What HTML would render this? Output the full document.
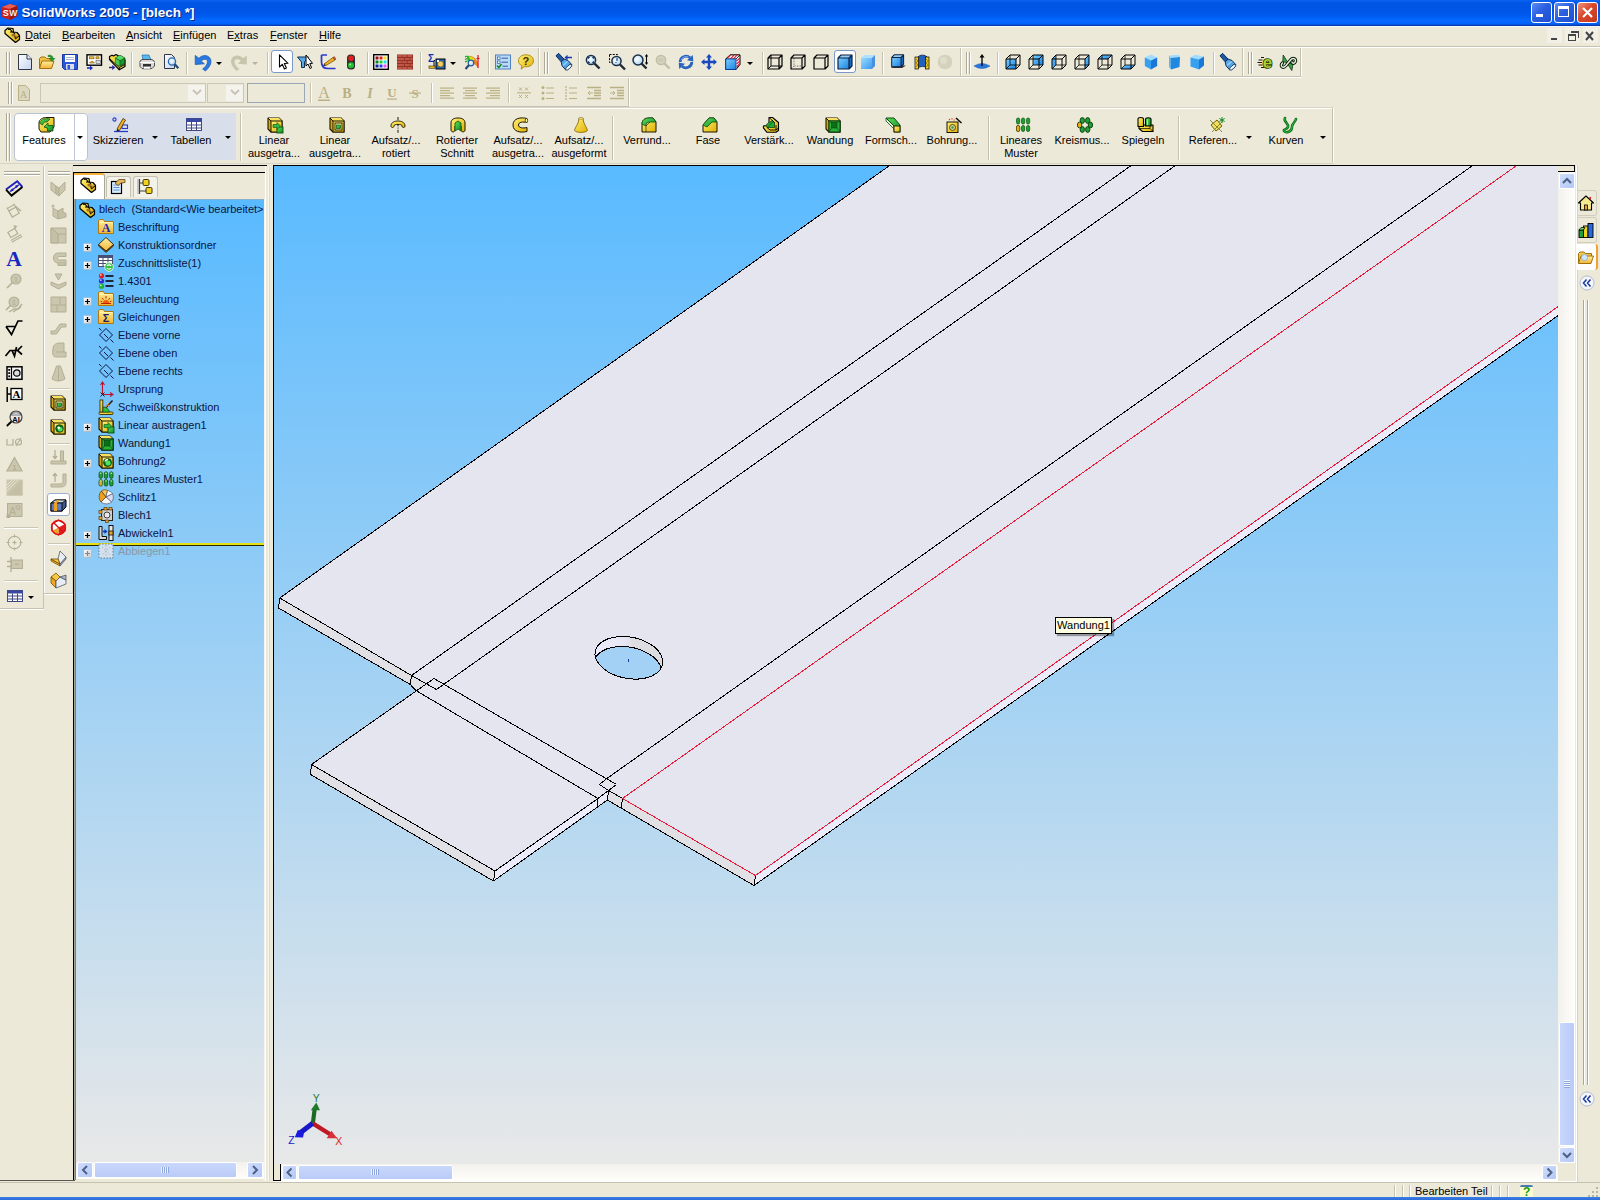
<!DOCTYPE html><html><head><meta charset="utf-8"><title>SolidWorks 2005 - [blech *]</title><style>
html,body{margin:0;padding:0;}
body{width:1600px;height:1200px;overflow:hidden;background:#ECE9D8;position:relative;font-family:"Liberation Sans",sans-serif;font-size:11px;color:#000;}
.a{position:absolute;}
.t{position:absolute;white-space:nowrap;line-height:13px;font-size:11px;}
.c{position:absolute;white-space:nowrap;line-height:13px;font-size:11px;text-align:center;width:80px;}
svg{position:absolute;overflow:visible;}
u{text-decoration:underline;}
.m::first-letter{text-decoration:underline;}
.sep{position:absolute;width:1px;background:#c5c2b2;border-right:1px solid #fff;}
.grip{position:absolute;width:1px;background:#aca899;border-right:1px solid #fff;}
</style></head><body>
<div class="a" style="left:0px;top:0px;width:1600px;height:26px;background:linear-gradient(#0c64f2 0%,#0459ea 8%,#0055e5 14%,#0055e6 42%,#0058ec 55%,#005ef4 65%,#0067fb 74%,#0a66ff 82%,#0062ff 90%,#0656e0 94%,#083cae 98%,#0838a0 100%);"></div>
<div class="a" style="left:0px;top:26px;width:1600px;height:1px;background:#f2f5fa;"></div>
<div class="t" style="left:21.5px;top:5px;font-size:13.5px;line-height:16px;font-weight:bold;color:#fff;text-shadow:1px 1px 0 #0a2a80;">SolidWorks 2005 - [blech *]</div>
<svg style="left:1px;top:3px;" width="17" height="18"><polygon points="1,4 9,1 16,3 16,13 9,17 1,14" fill="#c8201c"/><polygon points="1,4 9,1 16,3 9,6" fill="#e8605a"/><polygon points="9,6 16,3 16,13 9,17" fill="#a01410"/>
<text x="1.8" y="12.5" font-family="Liberation Sans,sans-serif" font-size="9" font-weight="bold" fill="#fff">S</text><text x="8.2" y="12.5" font-family="Liberation Sans,sans-serif" font-size="8.5" font-weight="bold" fill="#f4e8e8">W</text></svg>
<div class="a" style="left:1531px;top:2px;width:19px;height:19px;border:1px solid #fff;border-radius:3px;background:linear-gradient(135deg,#5c8cf5 0%,#2a5fe0 45%,#1f4fd0 100%);"></div>
<div class="a" style="left:1536px;top:14px;width:7px;height:3px;background:#fff;"></div>
<div class="a" style="left:1554px;top:2px;width:19px;height:19px;border:1px solid #fff;border-radius:3px;background:linear-gradient(135deg,#5c8cf5 0%,#2a5fe0 45%,#1f4fd0 100%);"></div>
<div class="a" style="left:1558px;top:6px;width:9px;height:7px;border:1px solid #fff;border-top:3px solid #fff;box-sizing:content-box;"></div>
<div class="a" style="left:1577px;top:2px;width:19px;height:19px;border:1px solid #fff;border-radius:3px;background:linear-gradient(135deg,#f0937a 0%,#d9472b 45%,#c23a1e 100%);"></div>
<svg style="left:1578px;top:3px;" width="19" height="19"><path d="M5 5 L14 14 M14 5 L5 14" stroke="#fff" stroke-width="2.2" fill="none"/></svg>
<div class="t m" style="left:25px;top:29px;">Datei</div>
<div class="t m" style="left:62px;top:29px;">Bearbeiten</div>
<div class="t m" style="left:126px;top:29px;">Ansicht</div>
<div class="t m" style="left:173px;top:29px;">Einfügen</div>
<div class="t" style="left:227px;top:29px;">Extras</div>
<div class="t m" style="left:270px;top:29px;">Fenster</div>
<div class="t m" style="left:319px;top:29px;">Hilfe</div>
<div class="a" style="left:234px;top:40px;width:6px;height:1px;background:#000;"></div>
<div class="a" style="left:1547px;top:28px;width:15px;height:15px;background:#f1efe6;"></div>
<div class="a" style="left:1565px;top:28px;width:15px;height:15px;background:#f1efe6;"></div>
<div class="a" style="left:1583px;top:28px;width:15px;height:15px;background:#f1efe6;"></div>
<svg style="left:1547px;top:28px;" width="52" height="16"><rect x="4" y="10" width="6" height="2" fill="#444"/>
<rect x="21.5" y="6.5" width="7" height="6" fill="none" stroke="#444"/><rect x="21" y="6" width="8" height="2" fill="#444"/><path d="M24 4.5 H31.5 V10" fill="none" stroke="#444"/><rect x="24" y="3" width="8" height="2" fill="#444"/>
<path d="M39 4 L46 12 M46 4 L39 12" stroke="#444" stroke-width="2" fill="none"/></svg>
<div class="a" style="left:0px;top:46px;width:1600px;height:1px;background:#c5c2b2;"></div>
<div class="a" style="left:0px;top:47px;width:1600px;height:1px;background:#fff;"></div>
<div class="grip" style="left:6px;top:52px;height:22px;"></div>
<div class="grip" style="left:9px;top:52px;height:22px;"></div>
<div class="a" style="left:0px;top:76px;width:1301px;height:1px;background:#c5c2b2;"></div>
<div class="a" style="left:0px;top:77px;width:1301px;height:1px;background:#fff;"></div>
<div class="sep" style="left:131px;top:52px;height:22px;"></div>
<div class="sep" style="left:186px;top:52px;height:22px;"></div>
<div class="sep" style="left:267px;top:52px;height:22px;"></div>
<div class="sep" style="left:367px;top:52px;height:22px;"></div>
<div class="sep" style="left:420px;top:52px;height:22px;"></div>
<div class="sep" style="left:488px;top:52px;height:22px;"></div>
<div class="sep" style="left:578px;top:52px;height:22px;"></div>
<div class="sep" style="left:762px;top:52px;height:22px;"></div>
<div class="sep" style="left:882px;top:52px;height:22px;"></div>
<div class="sep" style="left:997px;top:52px;height:22px;"></div>
<div class="sep" style="left:1213px;top:52px;height:22px;"></div>
<div class="a" style="left:538px;top:48px;width:1px;height:28px;background:#c5c2b2;"></div>
<div class="a" style="left:539px;top:48px;width:1px;height:28px;background:#fff;"></div>
<div class="a" style="left:960px;top:48px;width:1px;height:28px;background:#c5c2b2;"></div>
<div class="a" style="left:961px;top:48px;width:1px;height:28px;background:#fff;"></div>
<div class="a" style="left:1242px;top:48px;width:1px;height:28px;background:#c5c2b2;"></div>
<div class="a" style="left:1243px;top:48px;width:1px;height:28px;background:#fff;"></div>
<div class="a" style="left:1300px;top:48px;width:1px;height:28px;background:#c5c2b2;"></div>
<div class="a" style="left:1301px;top:48px;width:1px;height:28px;background:#fff;"></div>
<div class="grip" style="left:544px;top:52px;height:22px;"></div>
<div class="grip" style="left:547px;top:52px;height:22px;"></div>
<div class="grip" style="left:966px;top:52px;height:22px;"></div>
<div class="grip" style="left:969px;top:52px;height:22px;"></div>
<div class="grip" style="left:1248px;top:52px;height:22px;"></div>
<div class="grip" style="left:1251px;top:52px;height:22px;"></div>
<div class="a" style="left:271px;top:50px;width:22px;height:23px;border:1px solid #7a98c8;border-radius:3px;background:#fff;box-sizing:border-box;"></div>
<div class="a" style="left:834px;top:50px;width:22px;height:23px;border:1px solid #7a98c8;border-radius:3px;background:#fff;box-sizing:border-box;"></div>
<div class="grip" style="left:8px;top:82px;height:22px;"></div>
<div class="grip" style="left:11px;top:82px;height:22px;"></div>
<div class="a" style="left:0px;top:106px;width:629px;height:1px;background:#c5c2b2;"></div>
<div class="a" style="left:0px;top:107px;width:1333px;height:1px;background:#d8d5c6;"></div>
<div class="a" style="left:0px;top:108px;width:1333px;height:1px;background:#fff;"></div>
<div class="a" style="left:628px;top:78px;width:1px;height:28px;background:#c5c2b2;"></div>
<div class="a" style="left:629px;top:78px;width:1px;height:28px;background:#fff;"></div>
<div class="sep" style="left:310px;top:83px;height:20px;"></div>
<div class="sep" style="left:431px;top:83px;height:20px;"></div>
<div class="sep" style="left:508px;top:83px;height:20px;"></div>
<div class="a" style="left:40px;top:83px;width:166px;height:20px;border:1px solid #c9c7ba;box-sizing:border-box;background:#ECE9D8;"></div>
<div class="a" style="left:188px;top:85px;width:17px;height:16px;background:#f4f3ee;"></div>
<div class="a" style="left:207px;top:83px;width:37px;height:20px;border:1px solid #c9c7ba;box-sizing:border-box;background:#ECE9D8;"></div>
<div class="a" style="left:226px;top:85px;width:17px;height:16px;background:#f4f3ee;"></div>
<div class="a" style="left:247px;top:83px;width:58px;height:20px;border:1px solid #9aa7b5;box-sizing:border-box;background:#ECE9D8;"></div>
<svg style="left:190px;top:88px;" width="14" height="10"><path d="M3 2 L7 6 L11 2" fill="none" stroke="#c5c3b5" stroke-width="1.8"/></svg>
<svg style="left:228px;top:88px;" width="14" height="10"><path d="M3 2 L7 6 L11 2" fill="none" stroke="#c5c3b5" stroke-width="1.8"/></svg>
<div class="grip" style="left:6px;top:113px;height:48px;"></div>
<div class="grip" style="left:9px;top:113px;height:48px;"></div>
<div class="a" style="left:14px;top:113px;width:74px;height:48px;border:1px solid #b8c4d4;border-radius:4px;background:#fff;box-sizing:border-box;"></div>
<div class="a" style="left:74px;top:114px;width:1px;height:46px;background:#c0c8d4;"></div>
<div class="a" style="left:88px;top:113px;width:148px;height:47px;background:#d8dfea;"></div>
<div class="a" style="left:240px;top:113px;width:1px;height:48px;background:#c5c2b2;"></div>
<div class="a" style="left:241px;top:113px;width:1px;height:48px;background:#fff;"></div>
<div class="a" style="left:612px;top:116px;width:1px;height:44px;background:#c5c2b2;"></div>
<div class="a" style="left:613px;top:116px;width:1px;height:44px;background:#fff;"></div>
<div class="a" style="left:988px;top:116px;width:1px;height:44px;background:#c5c2b2;"></div>
<div class="a" style="left:989px;top:116px;width:1px;height:44px;background:#fff;"></div>
<div class="a" style="left:1178px;top:116px;width:1px;height:44px;background:#c5c2b2;"></div>
<div class="a" style="left:1179px;top:116px;width:1px;height:44px;background:#fff;"></div>
<div class="a" style="left:1332px;top:108px;width:1px;height:54px;background:#c5c2b2;"></div>
<div class="a" style="left:1333px;top:108px;width:1px;height:54px;background:#fff;"></div>
<div class="a" style="left:0px;top:163px;width:1334px;height:1px;background:#d8d5c6;"></div>
<svg style="left:77px;top:136px;" width="6" height="3"><polygon points="0,0 6,0 3,3" fill="#000"/></svg>
<svg style="left:152px;top:136px;" width="6" height="3"><polygon points="0,0 6,0 3,3" fill="#000"/></svg>
<svg style="left:225px;top:136px;" width="6" height="3"><polygon points="0,0 6,0 3,3" fill="#000"/></svg>
<svg style="left:1246px;top:136px;" width="6" height="3"><polygon points="0,0 6,0 3,3" fill="#000"/></svg>
<svg style="left:1320px;top:136px;" width="6" height="3"><polygon points="0,0 6,0 3,3" fill="#000"/></svg>
<svg style="left:216px;top:62px;" width="6" height="3"><polygon points="0,0 6,0 3,3" fill="#000"/></svg>
<svg style="left:252px;top:62px;" width="6" height="3"><polygon points="0,0 6,0 3,3" fill="#b5b2a0"/></svg>
<svg style="left:450px;top:62px;" width="6" height="3"><polygon points="0,0 6,0 3,3" fill="#000"/></svg>
<svg style="left:747px;top:62px;" width="6" height="3"><polygon points="0,0 6,0 3,3" fill="#000"/></svg>
<div class="c" style="left:4px;top:134px;">Features</div>
<div class="c" style="left:78px;top:134px;">Skizzieren</div>
<div class="c" style="left:151px;top:134px;">Tabellen</div>
<div class="c" style="left:234px;top:134px;">Linear</div>
<div class="c" style="left:234px;top:147px;">ausgetra...</div>
<div class="c" style="left:295px;top:134px;">Linear</div>
<div class="c" style="left:295px;top:147px;">ausgetra...</div>
<div class="c" style="left:356px;top:134px;">Aufsatz/...</div>
<div class="c" style="left:356px;top:147px;">rotiert</div>
<div class="c" style="left:417px;top:134px;">Rotierter</div>
<div class="c" style="left:417px;top:147px;">Schnitt</div>
<div class="c" style="left:478px;top:134px;">Aufsatz/...</div>
<div class="c" style="left:478px;top:147px;">ausgetra...</div>
<div class="c" style="left:539px;top:134px;">Aufsatz/...</div>
<div class="c" style="left:539px;top:147px;">ausgeformt</div>
<div class="c" style="left:607px;top:134px;">Verrund...</div>
<div class="c" style="left:668px;top:134px;">Fase</div>
<div class="c" style="left:729px;top:134px;">Verstärk...</div>
<div class="c" style="left:790px;top:134px;">Wandung</div>
<div class="c" style="left:851px;top:134px;">Formsch...</div>
<div class="c" style="left:912px;top:134px;">Bohrung...</div>
<div class="c" style="left:981px;top:134px;">Lineares</div>
<div class="c" style="left:981px;top:147px;">Muster</div>
<div class="c" style="left:1042px;top:134px;">Kreismus...</div>
<div class="c" style="left:1103px;top:134px;">Spiegeln</div>
<div class="c" style="left:1173px;top:134px;">Referen...</div>
<div class="c" style="left:1246px;top:134px;">Kurven</div>
<div class="a" style="left:43px;top:166px;width:1px;height:442px;background:#c5c2b2;"></div>
<div class="a" style="left:44px;top:166px;width:1px;height:428px;background:#fff;"></div>
<div class="a" style="left:0px;top:608px;width:44px;height:1px;background:#c5c2b2;"></div>
<div class="a" style="left:0px;top:609px;width:44px;height:1px;background:#fff;"></div>
<div class="a" style="left:72px;top:166px;width:1px;height:428px;background:#dcd9c8;"></div>
<div class="a" style="left:4px;top:171px;width:36px;height:1px;background:#aca899;"></div>
<div class="a" style="left:4px;top:172px;width:36px;height:1px;background:#fff;"></div>
<div class="a" style="left:4px;top:174px;width:36px;height:1px;background:#aca899;"></div>
<div class="a" style="left:4px;top:175px;width:36px;height:1px;background:#fff;"></div>
<div class="a" style="left:48px;top:171px;width:22px;height:1px;background:#aca899;"></div>
<div class="a" style="left:48px;top:172px;width:22px;height:1px;background:#fff;"></div>
<div class="a" style="left:48px;top:174px;width:22px;height:1px;background:#aca899;"></div>
<div class="a" style="left:48px;top:175px;width:22px;height:1px;background:#fff;"></div>
<div class="a" style="left:73px;top:165px;width:194px;height:1px;background:#000;"></div>
<div class="a" style="left:73px;top:172px;width:193px;height:1px;background:#000;"></div>
<div class="a" style="left:73px;top:172px;width:1px;height:1008px;background:#000;"></div>
<div class="a" style="left:74px;top:199px;width:1px;height:981px;background:#a4a698;"></div>
<div class="a" style="left:75px;top:199px;width:1px;height:981px;background:#708088;"></div>
<div class="a" style="left:0px;top:1180px;width:75px;height:1px;background:#555;"></div>
<div class="a" style="left:265px;top:166px;width:1px;height:1015px;background:#fff;"></div>
<div class="a" style="left:268px;top:166px;width:1px;height:1015px;background:#f8f6ee;"></div>
<div class="a" style="left:269px;top:166px;width:1px;height:1015px;background:#dedbcc;"></div>
<div class="a" style="left:74px;top:173px;width:31px;height:26px;background:#fff;border-top:2px solid #f5b13a;border-right:1px solid #aca899;box-sizing:border-box;border-radius:0 3px 0 0;"></div>
<div class="a" style="left:106px;top:176px;width:25px;height:21px;background:#f3f2ea;border:1px solid #c5c2b2;border-bottom:none;box-sizing:border-box;border-radius:3px 3px 0 0;"></div>
<div class="a" style="left:133px;top:176px;width:25px;height:21px;background:#f3f2ea;border:1px solid #c5c2b2;border-bottom:none;box-sizing:border-box;border-radius:3px 3px 0 0;"></div>
<div class="a" style="left:76px;top:199px;width:188px;height:963px;background:linear-gradient(#59baff 0%,#e8e8e8 100%);border-top:1px solid #8ab0d0;box-sizing:border-box;"></div>
<div class="a" style="left:264px;top:199px;width:1px;height:981px;background:#f4f4ee;"></div>
<div class="a" style="left:76px;top:1162px;width:188px;height:17px;background:linear-gradient(#f3f1ec,#fefefb);"></div>
<div class="a" style="left:77px;top:1162px;width:16px;height:16px;background:linear-gradient(135deg,#cfdcfd,#b4c8f6);border:1px solid #fff;border-radius:2px;box-sizing:border-box;box-shadow:0 0 0 0 #000;"></div>
<svg style="left:77px;top:1162px;" width="16" height="16"><path d="M10.0 4.0 L6.0 8.0 L10.0 12.0" fill="none" stroke="#4d6185" stroke-width="2"/></svg>
<div class="a" style="left:94px;top:1162px;width:143px;height:16px;background:linear-gradient(#c9d7fc,#b9cbf7);border:1px solid #fff;border-radius:2px;box-sizing:border-box;"></div>
<div class="a" style="left:161px;top:1167px;width:1px;height:6px;background:#eef4fe;border-right:1px solid #8ea6dc;width:1px;"></div>
<div class="a" style="left:163px;top:1167px;width:1px;height:6px;background:#eef4fe;border-right:1px solid #8ea6dc;width:1px;"></div>
<div class="a" style="left:165px;top:1167px;width:1px;height:6px;background:#eef4fe;border-right:1px solid #8ea6dc;width:1px;"></div>
<div class="a" style="left:167px;top:1167px;width:1px;height:6px;background:#eef4fe;border-right:1px solid #8ea6dc;width:1px;"></div>
<div class="a" style="left:247px;top:1162px;width:16px;height:16px;background:linear-gradient(135deg,#cfdcfd,#b4c8f6);border:1px solid #fff;border-radius:2px;box-sizing:border-box;box-shadow:0 0 0 0 #000;"></div>
<svg style="left:247px;top:1162px;" width="16" height="16"><path d="M6.0 4.0 L10.0 8.0 L6.0 12.0" fill="none" stroke="#4d6185" stroke-width="2"/></svg>
<div class="a" style="left:273px;top:165px;width:1302px;height:1px;background:#000;"></div>
<div class="a" style="left:273px;top:165px;width:1px;height:1016px;background:#000;"></div>
<div class="a" style="left:273px;top:1180px;width:8px;height:1px;background:#000;"></div>
<div class="a" style="left:280px;top:1164px;width:1px;height:17px;background:#000;"></div>
<div class="a" style="left:1558px;top:166px;width:17px;height:6px;background:#ECE9D8;border-bottom:1px solid #000;border-right:1px solid #000;box-sizing:border-box;"></div>
<div class="a" style="left:1558px;top:172px;width:17px;height:991px;background:linear-gradient(90deg,#f3f1ec,#fefefb);"></div>
<div class="a" style="left:1559px;top:173px;width:16px;height:16px;background:linear-gradient(135deg,#cfdcfd,#b4c8f6);border:1px solid #fff;border-radius:2px;box-sizing:border-box;box-shadow:0 0 0 0 #000;"></div>
<svg style="left:1559px;top:173px;" width="16" height="16"><path d="M4.0 10.0 L8.0 6.0 L12.0 10.0" fill="none" stroke="#4d6185" stroke-width="2"/></svg>
<div class="a" style="left:1559px;top:1022px;width:16px;height:124px;background:linear-gradient(90deg,#c9d7fc,#b9cbf7);border:1px solid #fff;border-radius:2px;box-sizing:border-box;"></div>
<div class="a" style="left:1564px;top:1080px;width:6px;height:1px;background:#eef4fe;border-bottom:1px solid #8ea6dc;height:1px;"></div>
<div class="a" style="left:1564px;top:1082px;width:6px;height:1px;background:#eef4fe;border-bottom:1px solid #8ea6dc;height:1px;"></div>
<div class="a" style="left:1564px;top:1084px;width:6px;height:1px;background:#eef4fe;border-bottom:1px solid #8ea6dc;height:1px;"></div>
<div class="a" style="left:1564px;top:1086px;width:6px;height:1px;background:#eef4fe;border-bottom:1px solid #8ea6dc;height:1px;"></div>
<div class="a" style="left:1559px;top:1147px;width:16px;height:16px;background:linear-gradient(135deg,#cfdcfd,#b4c8f6);border:1px solid #fff;border-radius:2px;box-sizing:border-box;box-shadow:0 0 0 0 #000;"></div>
<svg style="left:1559px;top:1147px;" width="16" height="16"><path d="M4.0 6.0 L8.0 10.0 L12.0 6.0" fill="none" stroke="#4d6185" stroke-width="2"/></svg>
<div class="a" style="left:281px;top:1164px;width:1277px;height:17px;background:linear-gradient(#f3f1ec,#fefefb);"></div>
<div class="a" style="left:282px;top:1165px;width:15px;height:15px;background:linear-gradient(135deg,#cfdcfd,#b4c8f6);border:1px solid #fff;border-radius:2px;box-sizing:border-box;box-shadow:0 0 0 0 #000;"></div>
<svg style="left:282px;top:1165px;" width="15" height="15"><path d="M9.5 3.5 L5.5 7.5 L9.5 11.5" fill="none" stroke="#4d6185" stroke-width="2"/></svg>
<div class="a" style="left:298px;top:1165px;width:155px;height:15px;background:linear-gradient(#c9d7fc,#b9cbf7);border:1px solid #fff;border-radius:2px;box-sizing:border-box;"></div>
<div class="a" style="left:371px;top:1169px;width:1px;height:6px;background:#eef4fe;border-right:1px solid #8ea6dc;width:1px;"></div>
<div class="a" style="left:373px;top:1169px;width:1px;height:6px;background:#eef4fe;border-right:1px solid #8ea6dc;width:1px;"></div>
<div class="a" style="left:375px;top:1169px;width:1px;height:6px;background:#eef4fe;border-right:1px solid #8ea6dc;width:1px;"></div>
<div class="a" style="left:377px;top:1169px;width:1px;height:6px;background:#eef4fe;border-right:1px solid #8ea6dc;width:1px;"></div>
<div class="a" style="left:1542px;top:1165px;width:15px;height:15px;background:linear-gradient(135deg,#cfdcfd,#b4c8f6);border:1px solid #fff;border-radius:2px;box-sizing:border-box;box-shadow:0 0 0 0 #000;"></div>
<svg style="left:1542px;top:1165px;" width="15" height="15"><path d="M5.5 3.5 L9.5 7.5 L5.5 11.5" fill="none" stroke="#4d6185" stroke-width="2"/></svg>
<div class="a" style="left:1558px;top:1163px;width:18px;height:18px;background:#ECE9D8;"></div>
<div class="a" style="left:1576px;top:166px;width:1px;height:1016px;background:#fff;"></div>
<div class="a" style="left:1577px;top:166px;width:1px;height:1016px;background:#d8d4c4;"></div>
<div class="a" style="left:273px;top:1181px;width:1304px;height:1px;background:#fff;"></div>
<div class="a" style="left:1578px;top:166px;width:22px;height:1016px;background:#ECE9D8;"></div>
<div class="a" style="left:1583px;top:300px;width:1px;height:785px;background:#aca899;"></div>
<div class="a" style="left:1584px;top:300px;width:1px;height:785px;background:#fff;"></div>
<div class="a" style="left:1587px;top:300px;width:1px;height:785px;background:#aca899;"></div>
<div class="a" style="left:1588px;top:300px;width:1px;height:785px;background:#fff;"></div>
<svg style="left:1579px;top:275px;" width="16" height="16"><circle cx="8" cy="8" r="7" fill="#f4f6fb" stroke="#b4bcd0"/><path d="M7.5 4.5 L4.5 8 L7.5 11.5 M11.5 4.5 L8.5 8 L11.5 11.5" fill="none" stroke="#1a3a9a" stroke-width="1.5"/></svg>
<svg style="left:1579px;top:1091px;" width="16" height="16"><circle cx="8" cy="8" r="7" fill="#f4f6fb" stroke="#b4bcd0"/><path d="M7.5 4.5 L4.5 8 L7.5 11.5 M11.5 4.5 L8.5 8 L11.5 11.5" fill="none" stroke="#1a3a9a" stroke-width="1.5"/></svg>
<div class="a" style="left:1578px;top:190px;width:19px;height:26px;border:1px solid #d0cdbd;border-left:none;border-radius:0 3px 3px 0;box-sizing:border-box;"></div>
<div class="a" style="left:1578px;top:217px;width:19px;height:26px;border:1px solid #d0cdbd;border-left:none;border-radius:0 3px 3px 0;box-sizing:border-box;"></div>
<div class="a" style="left:1576px;top:244px;width:22px;height:26px;background:#fff;border-right:2px solid #f0a030;border-radius:0 3px 3px 0;box-sizing:border-box;"></div>
<div class="a" style="left:0px;top:1182px;width:1600px;height:1px;background:#c5c2b2;"></div>
<div class="a" style="left:0px;top:1183px;width:1600px;height:14px;background:#ECE9D8;"></div>
<div class="a" style="left:1394px;top:1185px;width:1px;height:12px;background:#c5c2b2;"></div>
<div class="a" style="left:1395px;top:1185px;width:1px;height:12px;background:#fff;"></div>
<div class="a" style="left:1402px;top:1185px;width:1px;height:12px;background:#c5c2b2;"></div>
<div class="a" style="left:1403px;top:1185px;width:1px;height:12px;background:#fff;"></div>
<div class="a" style="left:1409px;top:1185px;width:1px;height:12px;background:#c5c2b2;"></div>
<div class="a" style="left:1410px;top:1185px;width:1px;height:12px;background:#fff;"></div>
<div class="a" style="left:1491px;top:1185px;width:1px;height:12px;background:#c5c2b2;"></div>
<div class="a" style="left:1492px;top:1185px;width:1px;height:12px;background:#fff;"></div>
<div class="a" style="left:1499px;top:1185px;width:1px;height:12px;background:#c5c2b2;"></div>
<div class="a" style="left:1500px;top:1185px;width:1px;height:12px;background:#fff;"></div>
<div class="a" style="left:1507px;top:1185px;width:1px;height:12px;background:#c5c2b2;"></div>
<div class="a" style="left:1508px;top:1185px;width:1px;height:12px;background:#fff;"></div>
<div class="t" style="left:1415px;top:1185px;">Bearbeiten Teil</div>
<div class="a" style="left:1520px;top:1185px;width:13px;height:12px;background:#fbfbd0;border-top:2px solid #4a7ab0;border-radius:2px 2px 0 0;box-sizing:border-box;"></div>
<div class="t" style="left:1523px;top:1186px;font-weight:bold;color:#10a010;font-size:12px;line-height:12px;">?</div>
<svg style="left:1588px;top:1187px;" width="12" height="12"><g fill="#b8b4a2"><rect x="8" y="0" width="2" height="2"/><rect x="8" y="4" width="2" height="2"/><rect x="4" y="4" width="2" height="2"/><rect x="8" y="8" width="2" height="2"/><rect x="4" y="8" width="2" height="2"/><rect x="0" y="8" width="2" height="2"/></g></svg>
<div class="a" style="left:0px;top:1197px;width:1600px;height:3px;background:linear-gradient(#3a80e8,#2a6ad8);"></div>
<div class="a" style="left:274px;top:166px;width:1284px;height:998px;background:linear-gradient(#59baff 0%,#e8e8e8 100%);overflow:hidden;">
<svg style="left:0;top:0;" width="1284" height="998" shape-rendering="auto"><polygon points="5.75,432.00 137.50,509.50 152.00,517.50 142.00,524.50 136.25,518.50 4.50,442.00" fill="#e0e0e5" stroke="none" stroke-width="1"/><polygon points="37.50,598.50 221.00,705.00 219.50,715.00 36.50,608.50" fill="#e0e0e5" stroke="none" stroke-width="1"/><polygon points="221.00,705.00 324.00,632.50 323.50,641.00 219.50,715.00" fill="#ececfa" stroke="none" stroke-width="1"/><polygon points="324.00,632.50 334.50,624.50 333.50,634.00 323.50,641.00" fill="#ececfa" stroke="none" stroke-width="1"/><polygon points="334.50,624.50 348.50,632.50 347.00,642.00 333.50,634.00" fill="#e0e0e5" stroke="none" stroke-width="1"/><polygon points="348.50,632.50 481.50,709.50 480.00,719.50 347.00,642.00" fill="#e0e0e5" stroke="none" stroke-width="1"/><polygon points="481.50,709.50 1286.00,139.20 1286.00,148.20 480.00,719.50" fill="#ececfa" stroke="none" stroke-width="1"/><polygon points="5.75,432.00 615.00,0.00 1286.00,0.00 1286.00,139.20 481.50,709.50 348.50,632.50 334.50,624.50 324.00,632.50 221.00,705.00 37.50,598.50 142.00,524.50 152.00,517.50 137.50,509.50" fill="#e4e5ee" stroke="none" stroke-width="1"/><defs><clipPath id="hc"><polygon points="375.20,477.40 380.74,481.28 384.99,485.68 387.73,490.39 388.82,495.17 388.21,499.79 385.94,504.00 382.10,507.60 376.90,510.41 370.60,512.28 363.51,513.13 355.99,512.91 348.41,511.63 341.16,509.35 334.60,506.20 329.06,502.32 324.81,497.92 322.07,493.21 320.98,488.43 321.59,483.81 323.86,479.60 327.70,476.00 332.90,473.19 339.20,471.32 346.29,470.47 353.81,470.69 361.39,471.97 368.64,474.25"/></clipPath><linearGradient id="hw" x1="0" x2="1"><stop offset="0" stop-color="#ececfc"/><stop offset="0.45" stop-color="#e6e6f4"/><stop offset="0.55" stop-color="#dedee2"/><stop offset="1" stop-color="#dcdce0"/></linearGradient></defs><polygon points="375.20,477.40 380.74,481.28 384.99,485.68 387.73,490.39 388.82,495.17 388.21,499.79 385.94,504.00 382.10,507.60 376.90,510.41 370.60,512.28 363.51,513.13 355.99,512.91 348.41,511.63 341.16,509.35 334.60,506.20 329.06,502.32 324.81,497.92 322.07,493.21 320.98,488.43 321.59,483.81 323.86,479.60 327.70,476.00 332.90,473.19 339.20,471.32 346.29,470.47 353.81,470.69 361.39,471.97 368.64,474.25" fill="url(#hw)" stroke="none" stroke-width="1"/><g clip-path="url(#hc)" shape-rendering="crispEdges"><polygon points="374.20,487.40 379.74,491.28 383.99,495.68 386.73,500.39 387.82,505.17 387.21,509.79 384.94,514.00 381.10,517.60 375.90,520.41 369.60,522.28 362.51,523.13 354.99,522.91 347.41,521.63 340.16,519.35 333.60,516.20 328.06,512.32 323.81,507.92 321.07,503.21 319.98,498.43 320.59,493.81 322.86,489.60 326.70,486.00 331.90,483.19 338.20,481.32 345.29,480.47 352.81,480.69 360.39,481.97 367.64,484.25" fill="#a2d1f5" stroke="#000" stroke-width="1"/></g><g shape-rendering="crispEdges"><polygon points="375.20,477.40 380.74,481.28 384.99,485.68 387.73,490.39 388.82,495.17 388.21,499.79 385.94,504.00 382.10,507.60 376.90,510.41 370.60,512.28 363.51,513.13 355.99,512.91 348.41,511.63 341.16,509.35 334.60,506.20 329.06,502.32 324.81,497.92 322.07,493.21 320.98,488.43 321.59,483.81 323.86,479.60 327.70,476.00 332.90,473.19 339.20,471.32 346.29,470.47 353.81,470.69 361.39,471.97 368.64,474.25" fill="none" stroke="#000" stroke-width="1"/></g><line x1="354.50" y1="493.00" x2="354.50" y2="496.00" stroke="#1040a0" stroke-width="1" shape-rendering="crispEdges"/><line x1="5.75" y1="432.00" x2="615.00" y2="0.00" stroke="#000" stroke-width="1" shape-rendering="crispEdges"/><line x1="5.75" y1="432.00" x2="137.50" y2="509.50" stroke="#000" stroke-width="1" shape-rendering="crispEdges"/><line x1="137.50" y1="509.50" x2="162.50" y2="523.50" stroke="#000" stroke-width="1" shape-rendering="crispEdges"/><line x1="5.75" y1="432.00" x2="4.50" y2="442.00" stroke="#000" stroke-width="1" shape-rendering="crispEdges"/><line x1="4.50" y1="442.00" x2="136.25" y2="518.50" stroke="#000" stroke-width="1" shape-rendering="crispEdges"/><line x1="137.50" y1="509.50" x2="136.25" y2="518.50" stroke="#000" stroke-width="1" shape-rendering="crispEdges"/><line x1="136.25" y1="518.50" x2="142.00" y2="524.50" stroke="#000" stroke-width="1" shape-rendering="crispEdges"/><line x1="142.00" y1="524.50" x2="324.00" y2="632.50" stroke="#000" stroke-width="1" shape-rendering="crispEdges"/><line x1="137.50" y1="509.50" x2="856.50" y2="0.00" stroke="#000" stroke-width="1" shape-rendering="crispEdges"/><line x1="162.50" y1="523.50" x2="900.60" y2="0.00" stroke="#000" stroke-width="1" shape-rendering="crispEdges"/><line x1="37.50" y1="598.50" x2="160.00" y2="512.50" stroke="#000" stroke-width="1" shape-rendering="crispEdges"/><line x1="160.00" y1="512.50" x2="332.50" y2="612.75" stroke="#000" stroke-width="1" shape-rendering="crispEdges"/><line x1="332.50" y1="612.75" x2="1198.00" y2="0.00" stroke="#000" stroke-width="1" shape-rendering="crispEdges"/><line x1="332.50" y1="612.75" x2="342.50" y2="618.50" stroke="#000" stroke-width="1" shape-rendering="crispEdges"/><line x1="342.50" y1="618.50" x2="334.50" y2="624.50" stroke="#000" stroke-width="1" shape-rendering="crispEdges"/><line x1="334.50" y1="624.50" x2="325.50" y2="618.50" stroke="#000" stroke-width="1" shape-rendering="crispEdges"/><line x1="325.50" y1="618.50" x2="332.50" y2="612.75" stroke="#000" stroke-width="1" shape-rendering="crispEdges"/><line x1="334.50" y1="624.50" x2="324.00" y2="632.50" stroke="#000" stroke-width="1" shape-rendering="crispEdges"/><line x1="334.50" y1="624.50" x2="333.50" y2="634.00" stroke="#000" stroke-width="1" shape-rendering="crispEdges"/><line x1="334.50" y1="624.50" x2="348.50" y2="632.50" stroke="#000" stroke-width="1" shape-rendering="crispEdges"/><line x1="324.00" y1="632.50" x2="221.00" y2="705.00" stroke="#000" stroke-width="1" shape-rendering="crispEdges"/><line x1="221.00" y1="705.00" x2="37.50" y2="598.50" stroke="#000" stroke-width="1" shape-rendering="crispEdges"/><line x1="37.50" y1="598.50" x2="36.50" y2="608.50" stroke="#000" stroke-width="1" shape-rendering="crispEdges"/><line x1="36.50" y1="608.50" x2="219.50" y2="715.00" stroke="#000" stroke-width="1" shape-rendering="crispEdges"/><line x1="221.00" y1="705.00" x2="219.50" y2="715.00" stroke="#000" stroke-width="1" shape-rendering="crispEdges"/><line x1="219.50" y1="715.00" x2="323.50" y2="641.00" stroke="#000" stroke-width="1" shape-rendering="crispEdges"/><line x1="324.00" y1="632.50" x2="323.50" y2="641.00" stroke="#000" stroke-width="1" shape-rendering="crispEdges"/><line x1="323.50" y1="641.00" x2="333.50" y2="634.00" stroke="#000" stroke-width="1" shape-rendering="crispEdges"/><line x1="333.50" y1="634.00" x2="347.00" y2="642.00" stroke="#000" stroke-width="1" shape-rendering="crispEdges"/><line x1="348.50" y1="632.50" x2="347.00" y2="642.00" stroke="#000" stroke-width="1" shape-rendering="crispEdges"/><line x1="347.00" y1="642.00" x2="480.00" y2="719.50" stroke="#000" stroke-width="1" shape-rendering="crispEdges"/><line x1="481.50" y1="709.50" x2="480.00" y2="719.50" stroke="#000" stroke-width="1" shape-rendering="crispEdges"/><line x1="480.00" y1="719.50" x2="1286.00" y2="148.20" stroke="#000" stroke-width="1" shape-rendering="crispEdges"/><line x1="348.50" y1="632.50" x2="1242.00" y2="0.00" stroke="#ea1c3c" stroke-width="1" shape-rendering="crispEdges"/><line x1="348.50" y1="632.50" x2="481.50" y2="709.50" stroke="#ea1c3c" stroke-width="1" shape-rendering="crispEdges"/><line x1="481.50" y1="709.50" x2="1286.00" y2="139.20" stroke="#ea1c3c" stroke-width="1" shape-rendering="crispEdges"/><g>
<line x1="38.89999999999998" y1="957" x2="40.60000000000002" y2="943.5" stroke="#1a6a22" stroke-width="4.2"/>
<polygon points="36.8,944.3 46.0,944.3 42.3,936.4" fill="#1e7a28"/>
<line x1="38.69999999999999" y1="957.3" x2="56.5" y2="968.5" stroke="#c01820" stroke-width="4.4"/>
<polygon points="52.7,972.2 57.5,964.8 63.0,972.2" fill="#d83038"/>
<line x1="38.69999999999999" y1="957.3" x2="26" y2="967" stroke="#1818c8" stroke-width="5"/>
<polygon points="20.8,971.3 23.8,964.0 30.0,966.3 29.0,971.5" fill="#1a1ae0"/>
<text x="42.30000000000001" y="936" text-anchor="middle" font-size="10.5" fill="#2a7a32" font-family="Liberation Sans,sans-serif">Y</text>
<text x="64.69999999999999" y="978.5" text-anchor="middle" font-size="10.5" fill="#e02028" font-family="Liberation Sans,sans-serif">X</text>
<text x="17.5" y="977.5" text-anchor="middle" font-size="10.5" fill="#1818c8" font-family="Liberation Sans,sans-serif">Z</text>
</g></svg>
<div class="a" style="left:781px;top:451px;width:57px;height:17px;box-sizing:border-box;border:1px solid #000;background:#ffffe1;font-size:11px;line-height:15px;text-align:center;box-shadow:2px 2px 1px rgba(0,0,0,0.35);">Wandung1</div>
</div>
<div class="a" style="left:76px;top:199px;width:188px;height:962px;overflow:hidden;">
<div class="t" style="left:23px;top:4px;color:#0c1440;">blech&nbsp; (Standard&lt;Wie bearbeitet&gt;</div>
<div class="t" style="left:42px;top:22px;color:#0c1440;">Beschriftung</div>
<div class="t" style="left:42px;top:40px;color:#0c1440;">Konstruktionsordner</div>
<div class="t" style="left:42px;top:58px;color:#0c1440;">Zuschnittsliste(1)</div>
<div class="t" style="left:42px;top:76px;color:#0c1440;">1.4301</div>
<div class="t" style="left:42px;top:94px;color:#0c1440;">Beleuchtung</div>
<div class="t" style="left:42px;top:112px;color:#0c1440;">Gleichungen</div>
<div class="t" style="left:42px;top:130px;color:#0c1440;">Ebene vorne</div>
<div class="t" style="left:42px;top:148px;color:#0c1440;">Ebene oben</div>
<div class="t" style="left:42px;top:166px;color:#0c1440;">Ebene rechts</div>
<div class="t" style="left:42px;top:184px;color:#0c1440;">Ursprung</div>
<div class="t" style="left:42px;top:202px;color:#0c1440;">Schweißkonstruktion</div>
<div class="t" style="left:42px;top:220px;color:#0c1440;">Linear austragen1</div>
<div class="t" style="left:42px;top:238px;color:#0c1440;">Wandung1</div>
<div class="t" style="left:42px;top:256px;color:#0c1440;">Bohrung2</div>
<div class="t" style="left:42px;top:274px;color:#0c1440;">Lineares Muster1</div>
<div class="t" style="left:42px;top:292px;color:#0c1440;">Schlitz1</div>
<div class="t" style="left:42px;top:310px;color:#0c1440;">Blech1</div>
<div class="t" style="left:42px;top:328px;color:#0c1440;">Abwickeln1</div>
<div class="t" style="left:42px;top:346px;color:#8a98a8;">Abbiegen1</div>
</div>
<svg style="left:83px;top:243px;" width="9" height="9"><rect x="0.5" y="0.5" width="8" height="8" rx="1" fill="url(#gPlus)" stroke="#a9bace" stroke-width="0.8"/><path d="M2 4.5 H7 M4.5 2 V7" stroke="#000" stroke-width="1.2"/></svg>
<svg style="left:83px;top:261px;" width="9" height="9"><rect x="0.5" y="0.5" width="8" height="8" rx="1" fill="url(#gPlus)" stroke="#a9bace" stroke-width="0.8"/><path d="M2 4.5 H7 M4.5 2 V7" stroke="#000" stroke-width="1.2"/></svg>
<svg style="left:83px;top:297px;" width="9" height="9"><rect x="0.5" y="0.5" width="8" height="8" rx="1" fill="url(#gPlus)" stroke="#a9bace" stroke-width="0.8"/><path d="M2 4.5 H7 M4.5 2 V7" stroke="#000" stroke-width="1.2"/></svg>
<svg style="left:83px;top:315px;" width="9" height="9"><rect x="0.5" y="0.5" width="8" height="8" rx="1" fill="url(#gPlus)" stroke="#a9bace" stroke-width="0.8"/><path d="M2 4.5 H7 M4.5 2 V7" stroke="#000" stroke-width="1.2"/></svg>
<svg style="left:83px;top:423px;" width="9" height="9"><rect x="0.5" y="0.5" width="8" height="8" rx="1" fill="url(#gPlus)" stroke="#a9bace" stroke-width="0.8"/><path d="M2 4.5 H7 M4.5 2 V7" stroke="#000" stroke-width="1.2"/></svg>
<svg style="left:83px;top:459px;" width="9" height="9"><rect x="0.5" y="0.5" width="8" height="8" rx="1" fill="url(#gPlus)" stroke="#a9bace" stroke-width="0.8"/><path d="M2 4.5 H7 M4.5 2 V7" stroke="#000" stroke-width="1.2"/></svg>
<svg style="left:83px;top:531px;" width="9" height="9"><rect x="0.5" y="0.5" width="8" height="8" rx="1" fill="url(#gPlus)" stroke="#a9bace" stroke-width="0.8"/><path d="M2 4.5 H7 M4.5 2 V7" stroke="#000" stroke-width="1.2"/></svg>
<svg style="left:83px;top:549px;" width="9" height="9"><rect x="0.5" y="0.5" width="8" height="8" rx="1" fill="url(#gPlus)" stroke="#a9bace" stroke-width="0.8"/><path d="M2 4.5 H7 M4.5 2 V7" stroke="#888" stroke-width="1.2"/></svg>
<div class="a" style="left:76px;top:543px;width:188px;height:2px;background:#e8e010;border-bottom:1px solid #282800;"></div>
<svg width="0" height="0" style="left:0;top:0;"><defs>
<linearGradient id="gPage" x1="0" y1="0" x2="1" y2="1"><stop offset="0" stop-color="#fff"/><stop offset="1" stop-color="#c4d4f0"/></linearGradient>
<linearGradient id="gFold" x1="0" y1="0" x2="0" y2="1"><stop offset="0" stop-color="#fff0a0"/><stop offset="1" stop-color="#f0b434"/></linearGradient>
<linearGradient id="gBlue" x1="0" y1="0" x2="1" y2="1"><stop offset="0" stop-color="#7ad0ff"/><stop offset="1" stop-color="#1a80e0"/></linearGradient>
<linearGradient id="gBlue2" x1="0" y1="0" x2="1" y2="1"><stop offset="0" stop-color="#9adcff"/><stop offset="1" stop-color="#3a98f0"/></linearGradient>
<radialGradient id="gLens" cx="0.4" cy="0.4" r="0.7"><stop offset="0" stop-color="#fff"/><stop offset="1" stop-color="#a8cdf0"/></radialGradient>
<linearGradient id="gYel" x1="0" y1="0" x2="1" y2="1"><stop offset="0" stop-color="#fff27a"/><stop offset="1" stop-color="#e0b000"/></linearGradient>
<linearGradient id="gGrn" x1="0" y1="0" x2="1" y2="1"><stop offset="0" stop-color="#60e060"/><stop offset="1" stop-color="#108a20"/></linearGradient>
<linearGradient id="gPlus" x1="0" y1="0" x2="1" y2="1"><stop offset="0" stop-color="#fff"/><stop offset="1" stop-color="#c8ccd0"/></linearGradient>
</defs></svg>
<svg style="left:16.5px;top:54px;" width="16" height="16" viewBox="0 0 16 16"><path d="M1.5 0.5 H10 L14.5 5 V15.5 H1.5 Z" fill="url(#gPage)" stroke="#303848"/><path d="M10 0.5 V5 H14.5" fill="#e8eefa" stroke="#303848"/></svg>
<svg style="left:39px;top:54px;" width="16" height="16" viewBox="0 0 16 16"><path d="M0.5 14.5 V4.5 L2 3 H6 L7.5 4.5 H12.5 V7" fill="#f0c040" stroke="#a87010"/><path d="M0.5 14.5 L3 7 H15 L12.5 14.5 Z" fill="url(#gFold)" stroke="#a87010"/><path d="M9 1.5 C12 0.5 14 2 14 4.5 L15.8 4.5 L13 7.5 L10.2 4.5 L12 4.5 C12 3 11 2.2 9 2.5 Z" fill="#20a030" stroke="#107018" stroke-width="0.6"/></svg>
<svg style="left:62px;top:54px;" width="16" height="16" viewBox="0 0 16 16"><path d="M0.5 0.5 H15.5 V15.5 H2.5 L0.5 13.5 Z" fill="#2a58d8" stroke="#1838a0"/><rect x="3" y="1" width="10" height="7" fill="#fff"/><path d="M4 3.5 H12 M4 5.5 H12" stroke="#a8b8d8" stroke-width="1"/><rect x="4" y="10" width="8" height="5.5" fill="#d8dce8"/><rect x="5.5" y="11" width="2.5" height="4" fill="#2a58d8"/></svg>
<svg style="left:86px;top:54px;" width="16" height="16" viewBox="0 0 16 16"><rect x="1" y="0.8" width="14.5" height="10.4" fill="#fff" stroke="#000" stroke-width="1.4"/><rect x="3.5" y="2.8" width="4.5" height="2" fill="#f0c830" stroke="#705000" stroke-width="0.6"/><rect x="10" y="2.8" width="3" height="2" fill="#f0c830" stroke="#705000" stroke-width="0.6"/><path d="M3.5 9 Q6 5.5 8.5 9 Z" fill="#f0c830" stroke="#705000" stroke-width="0.6"/><rect x="10" y="6.5" width="4.5" height="3" fill="#ddd" stroke="#555" stroke-width="0.6"/><path d="M1 14 H5" stroke="#2030c0" stroke-width="1.6"/><polygon points="4,11.5 7,14 4,16.5" fill="#2030c0"/></svg>
<svg style="left:109px;top:54px;" width="16" height="16" viewBox="0 0 16 16"><path d="M0.5 2.5 L3 1.2 L4.5 2 L7 0.5 L9.5 2 L16 6 V12.5 L10.3 15.8 L0.5 5.6 Z" fill="#f4d848" stroke="#000" stroke-width="1.2" stroke-linejoin="round"/><path d="M1 5 L10.3 13.5 L16 10.5 M10.3 13.5 V15.8" fill="none" stroke="#000" stroke-width="0.9"/><polygon points="11,1.3 15.8,4 15.8,9.5 11,12.2 6.4,9.5 6.4,4" fill="#18982a" stroke="#083c10" stroke-width="0.9" stroke-linejoin="round"/><polygon points="11,1.3 15.8,4 11,6.7 6.4,4" fill="#58d868"/><polygon points="6.4,4 11,6.7 11,12.2 6.4,9.5" fill="#48c858"/><path d="M6.4 4 L11 6.7 L15.8 4 M11 6.7 V12.2" stroke="#0a5a14" stroke-width="0.8" fill="none"/><path d="M0 13.5 H3.6" stroke="#202060" stroke-width="1.4"/><polygon points="3.2,11 6.4,13.5 3.2,16" fill="#2828a8"/></svg>
<svg style="left:139px;top:54px;" width="16" height="16" viewBox="0 0 16 16"><path d="M4 6 L3 1 H10 L12 6 Z" fill="#58b8f0" stroke="#2070b0" stroke-width="0.7"/><path d="M1 7 L3 5.5 H13 L15.5 7.5 V12 L13 14.5 H3 L1 12.5 Z" fill="#d8d8d8" stroke="#404040" stroke-width="0.9"/><path d="M1 8.5 H15.5" stroke="#fff"/><rect x="4" y="10" width="8" height="2.5" fill="#303030"/><rect x="4.5" y="12.5" width="7" height="2.5" fill="#fff" stroke="#606060" stroke-width="0.6"/></svg>
<svg style="left:163px;top:54px;" width="16" height="16" viewBox="0 0 16 16"><path d="M1.5 0.5 H8.5 L11.5 3.5 V14.5 H1.5 Z" fill="url(#gPage)" stroke="#303848"/><circle cx="9" cy="7.5" r="3.6" fill="url(#gLens)" stroke="#2868b0" stroke-width="1.3"/><path d="M11.8 10.3 L15.3 14.3" stroke="#204878" stroke-width="2.2"/></svg>
<svg style="left:195px;top:54.8px;" width="16" height="16" viewBox="0 0 16 16"><path d="M0.2 0.4 L0.2 9.6 L9.4 8.8 L6.3 6.2 C8 3.5 12.5 3.6 12.5 6.5 C12.5 9.5 10 12 7.6 14 L10.5 16 C13.5 13 16 10 16 6.5 C16 0.3 8 -1.6 4 3.3 Z" fill="#2a78e0" stroke="#1858b8" stroke-width="0.7"/></svg>
<svg style="left:231px;top:54.8px;" width="16" height="16" viewBox="0 0 16 16"><g transform="translate(16,0) scale(-1,1)"><path d="M0.2 0.4 L0.2 9.6 L9.4 8.8 L6.3 6.2 C8 3.5 12.5 3.6 12.5 6.5 C12.5 9.5 10 12 7.6 14 L10.5 16 C13.5 13 16 10 16 6.5 C16 0.3 8 -1.6 4 3.3 Z" fill="#c9c5ad"/></g></svg>
<svg style="left:275px;top:54px;" width="16" height="16" viewBox="0 0 16 16"><path d="M4.5 0.8 V13 L7.3 10.3 L9.4 15 L11.4 14.1 L9.3 9.5 L13 9.3 Z" fill="#fff" stroke="#000" stroke-width="1.1" stroke-linejoin="round"/></svg>
<svg style="left:297px;top:54px;" width="16" height="16" viewBox="0 0 16 16"><path d="M0.5 3 H11.5 L7.5 8 V13.5 H4.5 V8 Z" fill="#58a8e8" stroke="#103050" stroke-width="1"/><path d="M9 1 V12 L11 10 L13 14.5 L14.6 13.7 L12.8 9.5 L15.5 9.3 Z" fill="#fff" stroke="#000" stroke-width="1" stroke-linejoin="round"/></svg>
<svg style="left:320px;top:54px;" width="16" height="16" viewBox="0 0 16 16"><path d="M1.5 1 H7 M1.5 1 V8 Q1.5 14.5 8 14.5 H15.5" fill="none" stroke="#2838c8" stroke-width="1.7"/><path d="M4 10 L13 3.5 L15 6 L6 11.5 Z" fill="#f0b020" stroke="#604000" stroke-width="0.7"/><polygon points="4,10 6,11.5 3,12.2" fill="#202020"/><path d="M13 3.5 L14.3 2.6 L16 5 L15 6 Z" fill="#e05050" stroke="#604000" stroke-width="0.5"/></svg>
<svg style="left:343px;top:54px;" width="16" height="16" viewBox="0 0 16 16"><rect x="4" y="0.5" width="8" height="15" rx="3.5" fill="#303030"/><circle cx="8" cy="4.3" r="2.8" fill="#e02020"/><circle cx="8" cy="11.3" r="3" fill="#20c030"/><circle cx="7.2" cy="10.5" r="1" fill="#90f090"/></svg>
<svg style="left:373px;top:54px;" width="16" height="16" viewBox="0 0 16 16"><rect x="0.7" y="0.7" width="14.6" height="14.6" fill="#fff" stroke="#000" stroke-width="1.4"/><rect x="2.5" y="2.5" width="3" height="3" fill="#901010"/><rect x="6.5" y="2.5" width="3" height="3" fill="#e02020"/><rect x="10.5" y="2.5" width="3" height="3" fill="#f0e020"/><rect x="2.5" y="6.5" width="3" height="3" fill="#108020"/><rect x="6.5" y="6.5" width="3" height="3" fill="#20d030"/><rect x="10.5" y="6.5" width="3" height="3" fill="#20e0e0"/><rect x="2.5" y="10.5" width="3" height="3" fill="#1020a0"/><rect x="6.5" y="10.5" width="3" height="3" fill="#2040f0"/><rect x="10.5" y="10.5" width="3" height="3" fill="#f050f0"/></svg>
<svg style="left:397px;top:54px;" width="16" height="16" viewBox="0 0 16 16"><rect x="0" y="0.5" width="16" height="15" fill="#8c3022"/><rect x="0.3" y="1" width="4.5" height="2.1" fill="#c25646"/><rect x="5.3" y="1" width="4.5" height="2.1" fill="#c25646"/><rect x="10.6" y="1" width="4.5" height="2.1" fill="#c25646"/><rect x="15.9" y="1" width="-0.2" height="2.1" fill="#c25646"/><rect x="21.2" y="1" width="-5.5" height="2.1" fill="#c25646"/><rect x="0.3" y="4" width="4.5" height="2.1" fill="#c25646"/><rect x="2.7" y="4" width="4.5" height="2.1" fill="#c25646"/><rect x="8.0" y="4" width="4.5" height="2.1" fill="#c25646"/><rect x="13.3" y="4" width="2.4" height="2.1" fill="#c25646"/><rect x="18.6" y="4" width="-2.9" height="2.1" fill="#c25646"/><rect x="0.3" y="7" width="4.5" height="2.1" fill="#c25646"/><rect x="5.3" y="7" width="4.5" height="2.1" fill="#c25646"/><rect x="10.6" y="7" width="4.5" height="2.1" fill="#c25646"/><rect x="15.9" y="7" width="-0.2" height="2.1" fill="#c25646"/><rect x="21.2" y="7" width="-5.5" height="2.1" fill="#c25646"/><rect x="0.3" y="10" width="4.5" height="2.1" fill="#c25646"/><rect x="2.7" y="10" width="4.5" height="2.1" fill="#c25646"/><rect x="8.0" y="10" width="4.5" height="2.1" fill="#c25646"/><rect x="13.3" y="10" width="2.4" height="2.1" fill="#c25646"/><rect x="18.6" y="10" width="-2.9" height="2.1" fill="#c25646"/><rect x="0.3" y="13" width="4.5" height="2.1" fill="#c25646"/><rect x="5.3" y="13" width="4.5" height="2.1" fill="#c25646"/><rect x="10.6" y="13" width="4.5" height="2.1" fill="#c25646"/><rect x="15.9" y="13" width="-0.2" height="2.1" fill="#c25646"/><rect x="21.2" y="13" width="-5.5" height="2.1" fill="#c25646"/></svg>
<svg style="left:428px;top:54px;" width="18" height="16" viewBox="0 0 18 16"><text x="0" y="8" font-family="Liberation Sans,sans-serif" font-size="10" font-weight="bold" fill="#1030b0">Σ</text><path d="M7 6.5 H6 V13 M3 13 H7" stroke="#000" stroke-width="1" fill="none"/><rect x="1" y="12" width="6" height="2.2" fill="#f0c020" stroke="#000" stroke-width="0.5"/><rect x="8" y="5" width="9" height="10" fill="#2868c8" stroke="#000" stroke-width="1"/><circle cx="12.5" cy="10" r="3" fill="#f0d060" stroke="#604000" stroke-width="0.6"/><rect x="9" y="6" width="2" height="2" fill="#fff"/></svg>
<svg style="left:464px;top:54px;" width="16" height="16" viewBox="0 0 16 16"><path d="M3 2 C8 1 12 4 14 9 L14 14 C12 10 8 8 4 9 Z" fill="#f08020"/><path d="M3 2 C6 2 8 3 9.5 4.5 L7 9 C6 8.7 5 8.7 4 9 Z" fill="#30b030"/><path d="M5 2.2 C7 2.5 9 3.5 10.5 5 L9 9.5 C8 9 7.5 9 7 9 Z" fill="#e0e020"/><path d="M14 1 V14" stroke="#e01020" stroke-width="1.2"/><path d="M12.5 4.5 H15.5" stroke="#e01020" stroke-width="1.2"/><path d="M1 3 L3 2 M1 5.5 L3 4.5 M1 8 L3 7" stroke="#10a020" stroke-width="1.2"/><circle cx="7" cy="9" r="2.8" fill="url(#gLens)" stroke="#2060a8" stroke-width="1.2"/><path d="M5 11 L1.5 15" stroke="#204878" stroke-width="2"/></svg>
<svg style="left:495px;top:54px;" width="16" height="16" viewBox="0 0 16 16"><rect x="0.5" y="1" width="15" height="14" fill="#b8dcf8" stroke="#5080c0" stroke-width="1"/><rect x="2.5" y="3" width="2.5" height="2.5" fill="#fff" stroke="#3858a0" stroke-width="0.7"/><rect x="2.5" y="7" width="2.5" height="2.5" fill="#fff" stroke="#3858a0" stroke-width="0.7"/><path d="M6.5 4.2 H13 M6.5 8.2 H13 M7.5 12.2 H13" stroke="#3858a0" stroke-width="1"/><path d="M2 11.5 L3.8 13.5 L6.5 10" stroke="#109020" stroke-width="1.6" fill="none"/></svg>
<svg style="left:518px;top:54px;" width="16" height="16" viewBox="0 0 16 16"><path d="M8 0.8 C12.5 0.8 15.5 3.3 15.5 6.8 C15.5 10.5 12 12.8 8 12.8 C7.3 12.8 6.8 12.7 6.2 12.6 L3.2 15.2 L3.8 11.8 C1.6 10.7 0.5 8.9 0.5 6.8 C0.5 3.3 3.5 0.8 8 0.8 Z" fill="url(#gYel)" stroke="#a07800" stroke-width="0.8"/><text x="4.6" y="11" font-family="Liberation Sans,sans-serif" font-size="11" font-weight="bold" fill="#403000">?</text></svg>
<svg style="left:556px;top:54px;" width="16" height="16" viewBox="0 0 16 16"><g transform="rotate(-42 8 8)"><path d="M6.2 -2 H9.8 L10 6 H6 Z" fill="#1c58a8" stroke="#0a2858" stroke-width="0.9"/><path d="M6 6 H10 L12 9.5 V15 H4 V9.5 Z" fill="#58a8e8" stroke="#0a2858" stroke-width="0.9"/><path d="M5 10 H11" stroke="#a8dcff" stroke-width="1"/><ellipse cx="8" cy="15" rx="4" ry="1.6" fill="#e8f6ff" stroke="#0a2858" stroke-width="0.8"/></g><path d="M10 3.5 H16" stroke="#1838b0" stroke-width="1.5"/><polygon points="11.5,0.8 8.5,3.5 11.5,6.2" fill="#1838b0"/></svg>
<svg style="left:585px;top:54px;" width="16" height="16" viewBox="0 0 16 16"><circle cx="6" cy="6" r="4.6" fill="url(#gLens)" stroke="#183048" stroke-width="1.5"/><path d="M9.5 9.5 L14.5 14.5" stroke="#202830" stroke-width="2.4"/><path d="M3.5 4.8 V3.5 H4.8 M7.2 3.5 H8.5 V4.8 M8.5 7.2 V8.5 H7.2 M4.8 8.5 H3.5 V7.2" fill="none" stroke="#183870" stroke-width="1.2"/></svg>
<svg style="left:608.5px;top:53.5px;" width="17" height="17" viewBox="0 0 17 17"><rect x="0.5" y="0.5" width="8" height="8" fill="none" stroke="#000" stroke-width="1" stroke-dasharray="2,1.3"/><g transform="translate(1.5,1)"><circle cx="6" cy="6" r="4.6" fill="url(#gLens)" stroke="#183048" stroke-width="1.5"/><path d="M9.5 9.5 L14.5 14.5" stroke="#202830" stroke-width="2.4"/><path d="M6.5 3 V6 M5 7.5 H6" stroke="#183870" stroke-width="1.1"/></g></svg>
<svg style="left:631.5px;top:54px;" width="17" height="16" viewBox="0 0 17 16"><circle cx="6" cy="6" r="5" fill="url(#gLens)" stroke="#183048" stroke-width="1.5"/><path d="M9.5 9.5 L14.5 14.5" stroke="#202830" stroke-width="2.4"/><path d="M14.5 1.5 V9.5" stroke="#000" stroke-width="1.1"/><polygon points="14.5,0 12.8,2.6 16.2,2.6" fill="#000"/><polygon points="14.5,11 12.8,8.4 16.2,8.4" fill="#000"/></svg>
<svg style="left:655px;top:54px;" width="16" height="16" viewBox="0 0 16 16"><circle cx="6" cy="6" r="4.6" fill="#d8d5c0" stroke="#c0bda8" stroke-width="1.5"/><path d="M9.5 9.5 L14.5 14.5" stroke="#c0bda8" stroke-width="2.4"/><path d="M3.5 5 H8.5 M3.5 7 H8.5" stroke="#c0bda8" stroke-width="1.1"/></svg>
<svg style="left:678px;top:54px;" width="16" height="16" viewBox="0 0 16 16"><path d="M2.2 8 A5.8 5.8 0 0 1 12 3.8" fill="none" stroke="#2a64c0" stroke-width="2.8"/><polygon points="14.8,1 15.3,7.6 9,6.2" fill="#2a64c0"/><path d="M13.8 8 A5.8 5.8 0 0 1 4 12.2" fill="none" stroke="#2a64c0" stroke-width="2.8"/><polygon points="1.2,15 0.7,8.4 7,9.8" fill="#2a64c0"/><path d="M3 6.5 A5.5 5.5 0 0 1 10.5 3" fill="none" stroke="#80b0f0" stroke-width="0.9"/></svg>
<svg style="left:701px;top:54px;" width="16" height="16" viewBox="0 0 16 16"><path d="M8 0 L11 3.5 H9.2 V6.8 H12.5 V5 L16 8 L12.5 11 V9.2 H9.2 V12.5 H11 L8 16 L5 12.5 H6.8 V9.2 H3.5 V11 L0 8 L3.5 5 V6.8 H6.8 V3.5 H5 Z" fill="#1a48c0"/></svg>
<svg style="left:725px;top:54px;" width="16" height="16" viewBox="0 0 16 16"><polygon points="0.8,5 5,1 15,1 15,10.5 11,15.5 0.8,15.5" fill="#fff" stroke="#000" stroke-width="1"/><polygon points="0.8,5 5,1 15,1 11,5" fill="#fff" stroke="#000" stroke-width="0.8"/><path d="M3 3.5 L5.5 1.2 M5.5 4.8 L9 1.2 M8.5 4.8 L12 1.2" stroke="#e02030" stroke-width="1.2"/><path d="M11.5 7 L15 4 M11.5 10 L15 7 M11.5 13 L15 9.5" stroke="#e02030" stroke-width="1.2"/><rect x="0.8" y="5" width="10.2" height="10.5" fill="url(#gBlue)" stroke="#0838a0" stroke-width="0.8"/></svg>
<svg style="left:767px;top:54px;" width="16" height="16" viewBox="0 0 16 16"><polygon points="1,4 4,1 15,1 12,4" fill="none"/><polygon points="12,4 15,1 15,12 12,15" fill="none"/><rect x="1" y="4" width="11" height="11" fill="none"/><path d="M4 1 V12 H15 M4 12 L1 15" fill="none" stroke="#000" stroke-width="0.96"/><path d="M1 4 H12 V15 H1 Z M1 4 L4 1 H15 L12 4 M15 1 V12 L12 15" fill="none" stroke="#000" stroke-width="1.2" stroke-linejoin="round"/></svg>
<svg style="left:790px;top:54px;" width="16" height="16" viewBox="0 0 16 16"><polygon points="1,4 4,1 15,1 12,4" fill="none"/><polygon points="12,4 15,1 15,12 12,15" fill="none"/><rect x="1" y="4" width="11" height="11" fill="none"/><path d="M4 4 V12 H12 M4 12 L1 15" fill="none" stroke="#666" stroke-width="0.8" stroke-dasharray="1.5,1.2"/><path d="M1 4 H12 V15 H1 Z M1 4 L4 1 H15 L12 4 M15 1 V12 L12 15" fill="none" stroke="#000" stroke-width="1.2" stroke-linejoin="round"/></svg>
<svg style="left:813px;top:54px;" width="16" height="16" viewBox="0 0 16 16"><polygon points="1,4 4,1 15,1 12,4" fill="none"/><polygon points="12,4 15,1 15,12 12,15" fill="none"/><rect x="1" y="4" width="11" height="11" fill="none"/><path d="M1 4 H12 V15 H1 Z M1 4 L4 1 H15 L12 4 M15 1 V12 L12 15" fill="none" stroke="#000" stroke-width="1.2" stroke-linejoin="round"/></svg>
<svg style="left:837px;top:54px;" width="16" height="16" viewBox="0 0 16 16"><polygon points="1,4 4,1 15,1 12,4" fill="#90d0f8"/><polygon points="12,4 15,1 15,12 12,15" fill="#1868c0"/><rect x="1" y="4" width="11" height="11" fill="url(#gBlue)"/><path d="M1 4 H12 V15 H1 Z M1 4 L4 1 H15 L12 4 M15 1 V12 L12 15" fill="none" stroke="#102040" stroke-width="1.2" stroke-linejoin="round"/></svg>
<svg style="left:860px;top:54px;" width="16" height="16" viewBox="0 0 16 16"><polygon points="1,4 4,1 15,1 12,4" fill="#b0e0ff"/><polygon points="12,4 15,1 15,12 12,15" fill="#4890e0"/><rect x="1" y="4" width="11" height="11" fill="url(#gBlue2)"/></svg>
<svg style="left:890px;top:54px;" width="16" height="16" viewBox="0 0 16 16"><polygon points="1,14 12,14 16,11.5 5,11.5" fill="#303030"/><g transform="scale(0.85) translate(1,0)"><polygon points="1,4 4,1 15,1 12,4" fill="#90d0f8"/><polygon points="12,4 15,1 15,12 12,15" fill="#1868c0"/><rect x="1" y="4" width="11" height="11" fill="url(#gBlue)"/><path d="M1 4 H12 V15 H1 Z M1 4 L4 1 H15 L12 4 M15 1 V12 L12 15" fill="none" stroke="#102040" stroke-width="1.2" stroke-linejoin="round"/></g></svg>
<svg style="left:914px;top:54px;" width="16" height="16" viewBox="0 0 16 16"><path d="M4 3 C6 0.5 11 0.5 13 3 V14 C11 12 6 12 4 14 Z" fill="#2060c0" stroke="#0a2050" stroke-width="0.8"/><rect x="1" y="3" width="3.6" height="12" fill="#f0d020" stroke="#000" stroke-width="0.7"/><rect x="11.4" y="3" width="3.6" height="12" fill="#f0d020" stroke="#000" stroke-width="0.7"/><path d="M1.8 5 L3.8 7 L1.8 9 L3.8 11 L1.8 13 M12.2 5 L14.2 7 L12.2 9 L14.2 11 L12.2 13" stroke="#806000" stroke-width="0.8" fill="none"/></svg>
<svg style="left:937px;top:54px;" width="16" height="16" viewBox="0 0 16 16"><circle cx="8" cy="8" r="7.3" fill="#d4d1bc"/><circle cx="6.5" cy="6.5" r="3.5" fill="#e0ddc8"/></svg>
<svg style="left:974px;top:54px;" width="16" height="16" viewBox="0 0 16 16"><path d="M0 12 Q8 7 16 12 Q8 17 0 12 Z" fill="#2878e0" stroke="#1050b0" stroke-width="0.5"/><path d="M8 12 V2" stroke="#000" stroke-width="1.3"/><polygon points="8,0 5.5,3.5 10.5,3.5" fill="#000"/></svg>
<svg style="left:1005px;top:54px;" width="16" height="16" viewBox="0 0 16 16"><rect x="1" y="5" width="10" height="10" fill="url(#gBlue)"/><path d="M5 1 V11 H15 M5 11 L1 15" fill="none" stroke="#000" stroke-width="0.8"/><path d="M1 5 H11 V15 H1 Z M1 5 L5 1 H15 L11 5 M15 1 V11 L11 15" fill="none" stroke="#000" stroke-width="1"/></svg>
<svg style="left:1028px;top:54px;" width="16" height="16" viewBox="0 0 16 16"><rect x="5" y="1" width="10" height="10" fill="url(#gBlue)"/><path d="M5 1 V11 H15 M5 11 L1 15" fill="none" stroke="#000" stroke-width="0.8"/><path d="M1 5 H11 V15 H1 Z M1 5 L5 1 H15 L11 5 M15 1 V11 L11 15" fill="none" stroke="#000" stroke-width="1"/></svg>
<svg style="left:1051px;top:54px;" width="16" height="16" viewBox="0 0 16 16"><polygon points="1,5 5,1 5,11 1,15" fill="url(#gBlue)"/><path d="M5 1 V11 H15 M5 11 L1 15" fill="none" stroke="#000" stroke-width="0.8"/><path d="M1 5 H11 V15 H1 Z M1 5 L5 1 H15 L11 5 M15 1 V11 L11 15" fill="none" stroke="#000" stroke-width="1"/></svg>
<svg style="left:1074px;top:54px;" width="16" height="16" viewBox="0 0 16 16"><polygon points="11,5 15,1 15,11 11,15" fill="url(#gBlue)"/><path d="M5 1 V11 H15 M5 11 L1 15" fill="none" stroke="#000" stroke-width="0.8"/><path d="M1 5 H11 V15 H1 Z M1 5 L5 1 H15 L11 5 M15 1 V11 L11 15" fill="none" stroke="#000" stroke-width="1"/></svg>
<svg style="left:1097px;top:54px;" width="16" height="16" viewBox="0 0 16 16"><polygon points="1,5 5,1 15,1 11,5" fill="url(#gBlue)"/><path d="M5 1 V11 H15 M5 11 L1 15" fill="none" stroke="#000" stroke-width="0.8"/><path d="M1 5 H11 V15 H1 Z M1 5 L5 1 H15 L11 5 M15 1 V11 L11 15" fill="none" stroke="#000" stroke-width="1"/></svg>
<svg style="left:1120px;top:54px;" width="16" height="16" viewBox="0 0 16 16"><polygon points="1,15 5,11 15,11 11,15" fill="url(#gBlue)"/><path d="M5 1 V11 H15 M5 11 L1 15" fill="none" stroke="#000" stroke-width="0.8"/><path d="M1 5 H11 V15 H1 Z M1 5 L5 1 H15 L11 5 M15 1 V11 L11 15" fill="none" stroke="#000" stroke-width="1"/></svg>
<svg style="left:1143px;top:54px;" width="16" height="16" viewBox="0 0 16 16"><g transform="translate(8,0) scale(0.95,1) translate(-8,0)"><polygon points="8,0.5 14.5,3.5 8,6.5 1.5,3.5" fill="#a0dcff"/><polygon points="1.5,3.5 8,6.5 8,15.5 1.5,12" fill="#38a0f0"/><polygon points="14.5,3.5 8,6.5 8,15.5 14.5,12" fill="#1878d8"/></g></svg>
<svg style="left:1166px;top:54px;" width="16" height="16" viewBox="0 0 16 16"><polygon points="3,1.5 13,0.8 14,3 4.5,4" fill="#a0dcff"/><polygon points="3,1.5 4.5,4 5,15.5 3,13" fill="#58b8f8"/><polygon points="4.5,4 14,3 13.5,13 5,15.5" fill="#2088e0"/></svg>
<svg style="left:1189px;top:54px;" width="16" height="16" viewBox="0 0 16 16"><polygon points="6,0.8 15,2.5 10,5.5 1.5,3.5" fill="#a0dcff"/><polygon points="1.5,3.5 10,5.5 10,15.5 1.5,12.5" fill="#38a0f0"/><polygon points="15,2.5 10,5.5 10,15.5 15,11.5" fill="#1878d8"/></svg>
<svg style="left:1220px;top:54px;" width="16" height="16" viewBox="0 0 16 16"><g transform="rotate(-42 8 8)"><path d="M6.2 -2 H9.8 L10 6 H6 Z" fill="#1c58a8" stroke="#0a2858" stroke-width="0.9"/><path d="M6 6 H10 L12 9.5 V15 H4 V9.5 Z" fill="#58a8e8" stroke="#0a2858" stroke-width="0.9"/><path d="M5 10 H11" stroke="#a8dcff" stroke-width="1"/><ellipse cx="8" cy="15" rx="4" ry="1.6" fill="#e8f6ff" stroke="#0a2858" stroke-width="0.8"/></g></svg>
<svg style="left:1257px;top:55px;" width="17" height="15" viewBox="0 0 17 15"><path d="M4 2.5 H7 M1.5 5 H5.5 M0.5 7.5 H5 M1.5 10 H5.5 M4 12.5 H7" stroke="#181800" stroke-width="1"/><text x="5.8" y="13.2" font-family="Liberation Sans,sans-serif" font-size="17" font-weight="bold" fill="#a8d030" stroke="#283800" stroke-width="1.6" paint-order="stroke" stroke-linejoin="round">e</text></svg>
<svg style="left:1280px;top:54.5px;" width="16" height="16" viewBox="0 0 16 16"><polygon points="3.2,0 8.2,8 2.8,6.5" fill="#38a848" stroke="#0a3010" stroke-width="0.8"/><polygon points="11.8,15.5 7,8 13,9" fill="#38a848" stroke="#0a3010" stroke-width="0.8"/><path d="M2.5 8 C-0.5 11 3 14 6 10.5 L10.5 5 C13 2 17 4 15 7.2 C14 8.8 12.2 8.6 12 7" fill="none" stroke="#0a2008" stroke-width="3.4" stroke-linecap="round"/><path d="M2.5 8 C-0.5 11 3 14 6 10.5 L10.5 5 C13 2 17 4 15 7.2 C14 8.8 12.2 8.6 12 7" fill="none" stroke="#e8f0e0" stroke-width="1.4" stroke-linecap="round"/></svg>
<svg style="left:16px;top:85px;" width="16" height="16" viewBox="0 0 16 16"><path d="M2.5 0.5 H9.5 L13.5 4.5 V15.5 H2.5 Z" fill="#dcd8c0" stroke="#b9b083"/><text x="4" y="13" font-family="Liberation Serif,serif" font-size="10" fill="#b9b083">A</text></svg>
<svg style="left:316px;top:84.5px;" width="16" height="17" viewBox="0 0 16 17"><text x="8" y="13" text-anchor="middle" font-family="Liberation Serif,serif" font-size="16" fill="#b9b083">A</text><rect x="2" y="14.5" width="12" height="1.5" fill="#b9b083"/></svg>
<svg style="left:339px;top:85px;" width="16" height="16" viewBox="0 0 16 16"><text x="8" y="13" text-anchor="middle" font-family="Liberation Serif,serif" font-size="14" font-weight="bold" fill="#b9b083">B</text></svg>
<svg style="left:362px;top:85px;" width="16" height="16" viewBox="0 0 16 16"><text x="8" y="13" text-anchor="middle" font-family="Liberation Serif,serif" font-size="14" font-weight="bold" font-style="italic" fill="#b9b083">I</text></svg>
<svg style="left:384px;top:85px;" width="16" height="16" viewBox="0 0 16 16"><text x="8" y="12" text-anchor="middle" font-family="Liberation Serif,serif" font-size="13" font-weight="bold" fill="#b9b083">U</text><rect x="3" y="13.5" width="10" height="1.2" fill="#b9b083"/></svg>
<svg style="left:407px;top:85px;" width="16" height="16" viewBox="0 0 16 16"><text x="8" y="13" text-anchor="middle" font-family="Liberation Serif,serif" font-size="13" font-weight="bold" fill="#b9b083">S</text><rect x="2" y="7.5" width="12" height="1.2" fill="#b9b083"/></svg>
<svg style="left:439px;top:85px;" width="16" height="16" viewBox="0 0 16 16"><rect x="1" y="2.5" width="14" height="1.2" fill="#b9b083"/><rect x="1" y="5.0" width="10" height="1.2" fill="#b9b083"/><rect x="1" y="7.5" width="14" height="1.2" fill="#b9b083"/><rect x="1" y="10.0" width="10" height="1.2" fill="#b9b083"/><rect x="1" y="12.5" width="14" height="1.2" fill="#b9b083"/></svg>
<svg style="left:462px;top:85px;" width="16" height="16" viewBox="0 0 16 16"><rect x="1.0" y="2.5" width="14" height="1.2" fill="#b9b083"/><rect x="3.0" y="5.0" width="10" height="1.2" fill="#b9b083"/><rect x="1.0" y="7.5" width="14" height="1.2" fill="#b9b083"/><rect x="3.0" y="10.0" width="10" height="1.2" fill="#b9b083"/><rect x="1.0" y="12.5" width="14" height="1.2" fill="#b9b083"/></svg>
<svg style="left:485px;top:85px;" width="16" height="16" viewBox="0 0 16 16"><rect x="1" y="2.5" width="14" height="1.2" fill="#b9b083"/><rect x="5" y="5.0" width="10" height="1.2" fill="#b9b083"/><rect x="1" y="7.5" width="14" height="1.2" fill="#b9b083"/><rect x="5" y="10.0" width="10" height="1.2" fill="#b9b083"/><rect x="1" y="12.5" width="14" height="1.2" fill="#b9b083"/></svg>
<svg style="left:516px;top:85px;" width="16" height="16" viewBox="0 0 16 16"><path d="M3 2.5 L6 5.5 M6 2.5 L3 5.5 M9 2.5 L12 5.5 M12 2.5 L9 5.5 M3 10 L6 13 M6 10 L3 13 M9 10 L12 13 M12 10 L9 13" stroke="#b9b083" stroke-width="1"/><rect x="1" y="7.3" width="14" height="1.1" fill="#b9b083"/></svg>
<svg style="left:540px;top:85px;" width="16" height="16" viewBox="0 0 16 16"><circle cx="3" cy="2.5" r="1.5" fill="#b9b083"/><circle cx="3" cy="8" r="1.5" fill="#b9b083"/><circle cx="3" cy="13.5" r="1.5" fill="#b9b083"/><path d="M6 3 H14 M6 8 H14 M6 13.5 H14" stroke="#b9b083" stroke-width="1.2"/></svg>
<svg style="left:563px;top:85px;" width="16" height="16" viewBox="0 0 16 16"><path d="M3 1 V15" stroke="#b9b083" stroke-width="1.2" stroke-dasharray="2,1"/><path d="M6 3 H14 M6 8 H14 M6 13.5 H14" stroke="#b9b083" stroke-width="1.2"/></svg>
<svg style="left:586px;top:85px;" width="16" height="16" viewBox="0 0 16 16"><path d="M1 2.5 H15 M8 5.5 H15 M8 8 H15 M8 10.5 H15 M1 13.5 H15" stroke="#b9b083" stroke-width="1.3"/><path d="M2 8 H7 M4 6 L2 8 L4 10" stroke="#b9b083" stroke-width="1" fill="none"/></svg>
<svg style="left:609px;top:85px;" width="16" height="16" viewBox="0 0 16 16"><path d="M1 2.5 H15 M8 5.5 H15 M8 8 H15 M8 10.5 H15 M1 13.5 H15" stroke="#b9b083" stroke-width="1.3"/><path d="M1 8 H6 M4 6 L6 8 L4 10" stroke="#b9b083" stroke-width="1" fill="none"/></svg>
<svg style="left:37.5px;top:117px;" width="17" height="16" viewBox="0 0 17 16"><path d="M1 6 C1 2 5 0.5 9 0.5 H16 V10 L12 15 H3 L1 12 Z" fill="url(#gYel)" stroke="#1a1400" stroke-width="1"/><path d="M1.5 6 C3 2 8 1 12 2 L9 5 C7 4.5 5 5.5 4.5 8 Z" fill="url(#gGrn)" stroke="#0a5010" stroke-width="0.7"/><path d="M6 10 L10 6 V8.5 H15 V14 H9.5 V11 Z" fill="url(#gGrn)" stroke="#0a5010" stroke-width="0.8"/></svg>
<svg style="left:111.5px;top:117px;" width="17" height="16" viewBox="0 0 17 16"><circle cx="2.5" cy="2.5" r="1.6" fill="none" stroke="#2838c8" stroke-width="1.1"/><path d="M2 14.5 H16" stroke="#2838c8" stroke-width="1.3"/><rect x="10" y="8" width="5.5" height="3.5" fill="none" stroke="#2838c8" stroke-width="1.1"/><path d="M5 12 L11 1.5 L13.5 3 L7.5 13.5 Z" fill="#f0b020" stroke="#503000" stroke-width="0.8"/><polygon points="5,12 7.5,13.5 4.5,15" fill="#202020"/></svg>
<svg style="left:186px;top:117.5px;" width="16" height="13" viewBox="0 0 16 13"><rect x="0.5" y="0.5" width="15" height="12" fill="#fff" stroke="#404880" stroke-width="1"/><rect x="0.5" y="0.5" width="15" height="3.5" fill="#3848a0"/><path d="M0.5 7 H15.5 M0.5 10 H15.5 M5.5 4 V12.5 M10.5 4 V12.5" stroke="#404880" stroke-width="1"/></svg>
<svg style="left:267px;top:117px;" width="16" height="16" viewBox="0 0 16 16"><polygon points="1,1 12,1 15,4 15,15 4,15 1,12" fill="#d8a808" stroke="#1a1400" stroke-width="1.1" stroke-linejoin="round"/><polygon points="1,1 12,1 15,4 4,4" fill="#f8e060"/><rect x="4" y="4" width="11" height="11" fill="url(#gYel)" stroke="#1a1400" stroke-width="1"/><path d="M1 1 L4 4" stroke="#1a1400" stroke-width="1"/><rect x="10" y="10" width="6" height="6" fill="url(#gGrn)" stroke="#0a5010" stroke-width="0.9"/><polygon points="6,7.5 10,7.5 10,5.5 13.5,9 10,12.5 10,10.5 6,10.5" fill="#30b840" stroke="#0a5010" stroke-width="0.6"/></svg>
<svg style="left:328.5px;top:117px;" width="16" height="16" viewBox="0 0 16 16"><polygon points="1,1 12,1 15,4 15,15 4,15 1,12" fill="#d8a808" stroke="#1a1400" stroke-width="1.1" stroke-linejoin="round"/><polygon points="1,1 12,1 15,4 4,4" fill="#f8e060"/><rect x="4" y="4" width="11" height="11" fill="url(#gYel)" stroke="#1a1400" stroke-width="1"/><path d="M1 1 L4 4" stroke="#1a1400" stroke-width="1"/><rect x="6" y="6" width="7" height="7" fill="#fff8b0" stroke="#1a1400" stroke-width="0.9"/><rect x="7.5" y="8" width="4" height="3.5" fill="url(#gGrn)" stroke="#0a5010" stroke-width="0.7"/></svg>
<svg style="left:390px;top:117px;" width="16" height="16" viewBox="0 0 16 16"><path d="M8 0 V16" stroke="#000" stroke-width="0.9" stroke-dasharray="3,1.2,1,1.2"/><path d="M1 9 C1 5 5 4 8 4 C11 4 15 5 15 9 C15 11 12 11 12 9 C12 7.5 10 7.5 8 7.5 C6 7.5 4 7.5 4 9 C4 11 1 11 1 9 Z" fill="url(#gYel)" stroke="#1a1400" stroke-width="0.9"/></svg>
<svg style="left:450px;top:117px;" width="16" height="16" viewBox="0 0 16 16"><path d="M1 6 C1 2 4.5 1 8 1 C11.5 1 15 2 15 6 V13 C15 15.5 11 15.5 11 13 V9 H5 V13 C5 15.5 1 15.5 1 13 Z" fill="url(#gYel)" stroke="#1a1400" stroke-width="1"/><path d="M5 6 L8 4 L11 6 V14 L8 12 L5 14 Z" fill="url(#gGrn)" stroke="#0a5010" stroke-width="0.8"/></svg>
<svg style="left:511.5px;top:117px;" width="16" height="16" viewBox="0 0 16 16"><path d="M15 1.5 C9 0 1 1 1 8 C1 15 9 16 15 14.5 V10.5 C11 11.5 6.5 11 6.5 8 C6.5 5 11 4.5 15 5.5 Z" fill="url(#gYel)" stroke="#1a1400" stroke-width="1"/><ellipse cx="14.5" cy="3.5" rx="1.2" ry="2" fill="#fff8b0" stroke="#1a1400" stroke-width="0.6"/></svg>
<svg style="left:572.5px;top:117px;" width="16" height="16" viewBox="0 0 16 16"><path d="M6 1 H10 C10 7 14 10 14.5 13.5 C13 16 3 16 1.5 13.5 C2 10 6 7 6 1 Z" fill="url(#gYel)" stroke="#806000" stroke-width="0.8"/><ellipse cx="8" cy="1.5" rx="2" ry="0.9" fill="#fff8b0" stroke="#806000" stroke-width="0.5"/></svg>
<svg style="left:640.5px;top:117px;" width="16" height="16" viewBox="0 0 16 16"><path d="M1 7 C1 3 4 1 8 1 H12 L15 5 V15 H1 Z" fill="url(#gYel)" stroke="#1a1400" stroke-width="1"/><path d="M1 7 C1 3 4 1 8 1 H12 L15 5 H9 C6 5 5 6 5 9 Z" fill="url(#gGrn)" stroke="#0a5010" stroke-width="0.8"/><path d="M5 9 V15 M5 9 L9 5" stroke="#1a1400" stroke-width="0.6" fill="none"/></svg>
<svg style="left:702px;top:117px;" width="16" height="16" viewBox="0 0 16 16"><path d="M1 8 L7 1 H12 L15 5 V15 H1 Z" fill="url(#gYel)" stroke="#1a1400" stroke-width="1"/><path d="M1 8 L7 1 H12 L15 5 L10 5 L5 10 Z" fill="url(#gGrn)" stroke="#0a5010" stroke-width="0.8"/></svg>
<svg style="left:763px;top:117px;" width="16" height="16" viewBox="0 0 16 16"><path d="M6 0.5 H9.5 L15.5 5.5 V13.5 L13 15.3 H4 L0.4 10.8 V9 L3.2 8.6 L6 5.5 Z" fill="url(#gYel)" stroke="#000" stroke-width="1.1" stroke-linejoin="round"/><path d="M6 5.5 L9.5 3.5 L11.5 5.5 V10.5 H4 L3.2 8.6" fill="#28a838" stroke="#0a4a10" stroke-width="0.8"/><path d="M6 0.5 L11.5 5.5 M4 10.5 L7 13 H13 V8 M13 13 L15.5 11" fill="none" stroke="#000" stroke-width="0.9"/><path d="M5 9.8 L9.8 5" stroke="#0a6a18" stroke-width="1"/></svg>
<svg style="left:824.5px;top:117px;" width="16" height="16" viewBox="0 0 16 16"><polygon points="1,1 12,1 15,4 15,15 4,15 1,12" fill="#d8a808" stroke="#1a1400" stroke-width="1.1" stroke-linejoin="round"/><polygon points="1,1 12,1 15,4 4,4" fill="#f8e060"/><rect x="4" y="4" width="11" height="11" fill="url(#gYel)" stroke="#1a1400" stroke-width="1"/><path d="M1 1 L4 4" stroke="#1a1400" stroke-width="1"/><rect x="4" y="4" width="11" height="11" fill="#28b038" stroke="#0a4010" stroke-width="1"/><rect x="6.5" y="5.5" width="5.5" height="5.5" fill="#0a7018" stroke="#0a4010" stroke-width="0.6"/><path d="M4 4 L6.5 5.5 M15 4 L12 5.5 M4 15 L6.5 11 M15 15 L12 11" stroke="#0a4010" stroke-width="0.6"/></svg>
<svg style="left:885px;top:117px;" width="16" height="16" viewBox="0 0 16 16"><path d="M1 1 H9 L15 8 V15 H9 V9 Z" fill="url(#gGrn)" stroke="#0a5010" stroke-width="1"/><rect x="9" y="9" width="6" height="6" fill="url(#gYel)" stroke="#1a1400" stroke-width="0.9"/><path d="M1 1 L1 4 L9 12" stroke="#0a5010" stroke-width="0.8" fill="none"/></svg>
<svg style="left:945.5px;top:117px;" width="16" height="16" viewBox="0 0 16 16"><rect x="1" y="5" width="11" height="10.5" fill="url(#gYel)" stroke="#1a1400" stroke-width="1"/><circle cx="6.5" cy="10.5" r="3" fill="#d8d0a0" stroke="#504000" stroke-width="0.9"/><circle cx="6.5" cy="10.5" r="1.2" fill="#30a030"/><path d="M10 1 L15.5 6" stroke="#000" stroke-width="1.4"/><path d="M3 2 L4 3 M6 1 L6 2.6 M8.5 2.5 L7.8 3.5" stroke="#e04020" stroke-width="1.1"/></svg>
<svg style="left:1015px;top:117px;" width="16" height="16" viewBox="0 0 16 16"><rect x="1.5" y="1.0" width="3.2" height="6" rx="1.6" fill="#20a030" stroke="#0a5010" stroke-width="0.7"/><rect x="6.5" y="1.0" width="3.2" height="6" rx="1.6" fill="#20a030" stroke="#0a5010" stroke-width="0.7"/><rect x="11.5" y="1.0" width="3.2" height="6" rx="1.6" fill="#20a030" stroke="#0a5010" stroke-width="0.7"/><rect x="1.5" y="8.5" width="3.2" height="6" rx="1.6" fill="#20a030" stroke="#0a5010" stroke-width="0.7"/><rect x="6.5" y="8.5" width="3.2" height="6" rx="1.6" fill="#20a030" stroke="#0a5010" stroke-width="0.7"/><rect x="11.5" y="8.5" width="3.2" height="6" rx="1.6" fill="#20a030" stroke="#0a5010" stroke-width="0.7"/><rect x="1.5" y="8.5" width="3.2" height="6" rx="1.6" fill="#e8b020" stroke="#604000" stroke-width="0.7"/></svg>
<svg style="left:1076.5px;top:117px;" width="16" height="16" viewBox="0 0 16 16"><ellipse cx="13.4" cy="8.0" rx="2.2" ry="2.9" fill="#20a030" stroke="#0a3a10" stroke-width="0.9"/><ellipse cx="10.7" cy="12.5" rx="2.2" ry="2.9" fill="#20a030" stroke="#0a3a10" stroke-width="0.9"/><ellipse cx="5.3" cy="12.5" rx="2.2" ry="2.9" fill="#20a030" stroke="#0a3a10" stroke-width="0.9"/><ellipse cx="2.6" cy="8.0" rx="2.2" ry="2.9" fill="#e8b020" stroke="#0a3a10" stroke-width="0.9"/><ellipse cx="5.3" cy="3.5" rx="2.2" ry="2.9" fill="#20a030" stroke="#0a3a10" stroke-width="0.9"/><ellipse cx="10.7" cy="3.5" rx="2.2" ry="2.9" fill="#20a030" stroke="#0a3a10" stroke-width="0.9"/></svg>
<svg style="left:1137px;top:117px;" width="16" height="16" viewBox="0 0 16 16"><path d="M2 8 H16 V14.5 H5.5 L2 11.5 Z" fill="url(#gYel)" stroke="#000" stroke-width="1.1" stroke-linejoin="round"/><path d="M2 11.5 H13 L16 14.5 M13 11.5 V8" fill="none" stroke="#000" stroke-width="0.7"/><path d="M1 2 C1 0 6.5 0 6.5 2 V9.5 H1 Z" fill="url(#gYel)" stroke="#000" stroke-width="1.1"/><path d="M8.5 2.2 C8.5 0.2 14 0.2 14 2.2 V9 H8.5 Z" fill="url(#gGrn)" stroke="#000" stroke-width="1.1"/><path d="M10.5 2.5 V8" stroke="#90f0a0" stroke-width="1.2"/></svg>
<svg style="left:1208.5px;top:117px;" width="16" height="16" viewBox="0 0 16 16"><polygon points="2,8 8,3 13,9 7,14" fill="#f0e060" stroke="#605000" stroke-width="0.9"/><path d="M1 3 L13 15 M14 4 L3 15" stroke="#808020" stroke-width="0.9"/><path d="M13 0 V6 M10.3 1.5 L15.7 4.5 M15.7 1.5 L10.3 4.5" stroke="#109020" stroke-width="1"/></svg>
<svg style="left:1281.5px;top:117px;" width="16" height="16" viewBox="0 0 16 16"><path d="M3 1 C1 5 7 6 6 10 C5 13 1 12 2 14 C4 16.5 10 15 10 10 C10 6 13 6 14 2" fill="none" stroke="#0a6a18" stroke-width="2.6" stroke-linecap="round"/><path d="M3 1 C1 5 7 6 6 10 C5 13 1 12 2 14 C4 16.5 10 15 10 10 C10 6 13 6 14 2" fill="none" stroke="#30c040" stroke-width="1" stroke-linecap="round"/></svg>
<svg style="left:0;top:176px;" width="30" height="24"><path d="M6 13.6 L17.2 5.2 L22.4 11" fill="none" stroke="#2020c0" stroke-width="1.9" stroke-linejoin="miter"/><path d="M22.4 11 L11.6 19.6 L6 13.6" fill="none" stroke="#000" stroke-width="1.9" stroke-linejoin="miter"/><path d="M10.5 15.2 L18.4 9.2" stroke="#2020c0" stroke-width="1.3"/><polygon points="9.2,16.2 12.3,12.2 13.8,14.4" fill="#2020c0"/><polygon points="19.6,8.2 15,9.8 16.6,12" fill="#2020c0"/></svg>
<svg style="left:5.5px;top:202.5px;" width="17" height="17" viewBox="0 0 17 17"><g transform="rotate(-30 8 8)"><rect x="3.5" y="5.5" width="8" height="7" fill="none" stroke="#b3af95" stroke-width="1.2"/><path d="M3.5 5.5 V1.5 M11.5 5.5 V1.5 M3.5 2.5 H11.5" stroke="#b3af95" stroke-width="1"/></g><path d="M9 3 L15 8" stroke="#b3af95" stroke-width="1.6"/></svg>
<svg style="left:5.5px;top:226px;" width="17" height="17" viewBox="0 0 17 17"><g transform="rotate(-30 8 8)"><rect x="3.5" y="3.5" width="8" height="6" fill="none" stroke="#b3af95" stroke-width="1.2"/><path d="M2 12 H14 M2 14 H14" stroke="#b3af95" stroke-width="1"/><polygon points="12,0 15,3 11,4" fill="#b3af95"/></g></svg>
<svg style="left:5px;top:248.5px;" width="18" height="18" viewBox="0 0 18 18"><text x="9" y="16.5" text-anchor="middle" font-family="Liberation Serif,serif" font-size="21.5" font-weight="bold" fill="#1828c0">A</text></svg>
<svg style="left:5.5px;top:272.5px;" width="17" height="17" viewBox="0 0 17 17"><circle cx="10" cy="6" r="5" fill="#cbc7ae" stroke="#b3af95" stroke-width="1.1"/><text x="10" y="9" text-anchor="middle" font-family="Liberation Sans,sans-serif" font-size="8" fill="#b3af95">1</text><path d="M6.5 9.5 L1 15" stroke="#b3af95" stroke-width="1.6"/></svg>
<svg style="left:5px;top:295.5px;" width="18" height="17" viewBox="0 0 18 17"><circle cx="9" cy="6" r="5" fill="#cbc7ae" stroke="#b3af95" stroke-width="1.1"/><text x="9" y="9" text-anchor="middle" font-family="Liberation Sans,sans-serif" font-size="8" fill="#b3af95">1</text><path d="M5.5 9.5 L1 14" stroke="#b3af95" stroke-width="1.6"/><path d="M4 16 L9 13 H13 L17 8" stroke="#b3af95" stroke-width="1.3" fill="none"/><path d="M8 16 L16 11" stroke="#b3af95" stroke-width="1.3"/></svg>
<svg style="left:5px;top:318.5px;" width="18" height="17" viewBox="0 0 18 17"><path d="M1 7.5 L6.5 15.5 L13 2 H17.5 M1 7.5 H10" fill="none" stroke="#000" stroke-width="1.7"/></svg>
<svg style="left:5px;top:341.5px;" width="18" height="17" viewBox="0 0 18 17"><path d="M0.5 14 L5 8.5 H14 M17 4 L12.5 8.5 L17 12.5 M7 8.5 L9.5 14 L11.5 5" fill="none" stroke="#000" stroke-width="1.7"/></svg>
<svg style="left:5.5px;top:364.5px;" width="17" height="16" viewBox="0 0 17 16"><rect x="1" y="1.8" width="15" height="12.5" fill="#f4f4f4" stroke="#000" stroke-width="1.5"/><path d="M5.5 2 V14" stroke="#000" stroke-width="1.2"/><rect x="2.3" y="4" width="1.8" height="1.8" fill="#000"/><rect x="2.3" y="7.2" width="1.8" height="1.8" fill="#000"/><rect x="2.3" y="10.4" width="1.8" height="1.8" fill="#000"/><circle cx="10.8" cy="8" r="3.2" fill="#ddd" stroke="#000" stroke-width="1.2"/></svg>
<svg style="left:5.5px;top:386px;" width="17" height="17" viewBox="0 0 17 17"><path d="M1.2 1 V16 M1.2 8 H5" stroke="#000" stroke-width="1.5"/><rect x="5" y="2.5" width="11" height="11" fill="#fff" stroke="#000" stroke-width="1.3"/><text x="10.5" y="12" text-anchor="middle" font-family="Liberation Serif,serif" font-size="11" font-weight="bold" fill="#000">A</text></svg>
<svg style="left:5.5px;top:410px;" width="17" height="17" viewBox="0 0 17 17"><circle cx="10" cy="7" r="6" fill="#e8e8e8" stroke="#404040" stroke-width="1.2"/><path d="M4.5 5 Q10 0.5 15.5 5 Z" fill="#fff" stroke="#404040" stroke-width="0.7"/><text x="10" y="11.5" text-anchor="middle" font-family="Liberation Sans,sans-serif" font-size="7.5" font-weight="bold" fill="#000">AI</text><path d="M5.5 11.5 L0.8 16" stroke="#000" stroke-width="1.8"/></svg>
<svg style="left:5.5px;top:432.5px;" width="17" height="17" viewBox="0 0 17 17"><path d="M1 6 V12 H7 V6" fill="none" stroke="#b3af95" stroke-width="1.2"/><circle cx="12.5" cy="9" r="3" fill="none" stroke="#b3af95" stroke-width="1.2"/><path d="M10 13 L15 5" stroke="#b3af95" stroke-width="1.1"/></svg>
<svg style="left:5.5px;top:456px;" width="17" height="17" viewBox="0 0 17 17"><polygon points="8.5,1.5 16,15 1,15" fill="#cbc7ae" stroke="#b3af95" stroke-width="1.2"/><text x="8.5" y="13.5" text-anchor="middle" font-family="Liberation Sans,sans-serif" font-size="8" font-weight="bold" fill="#b3af95">1</text></svg>
<svg style="left:5.5px;top:479px;" width="17" height="17" viewBox="0 0 17 17"><rect x="0.5" y="0.5" width="16" height="16" fill="#cbc7ae"/><polygon points="0.5,16.5 16.5,0.5 16.5,16.5" fill="#c4c0a6"/><path d="M1 6 L6 1 M1 9 L9 1 M1 12 L12 1" stroke="#e4e1cf" stroke-width="1"/></svg>
<svg style="left:5.5px;top:502px;" width="17" height="17" viewBox="0 0 17 17"><rect x="1.5" y="1.5" width="14.5" height="13" fill="#cbc7ae" stroke="#b3af95" stroke-width="1"/><text x="6.5" y="12.5" text-anchor="middle" font-family="Liberation Sans,sans-serif" font-size="10" fill="#b3af95">A</text><circle cx="12" cy="5.5" r="2" fill="none" stroke="#b3af95" stroke-width="1"/><rect x="0.5" y="12.5" width="3.5" height="3.5" fill="#b3af95"/></svg>
<div class="a" style="left:4px;top:527px;width:34px;height:1px;background:#c9c6b4;"></div>
<div class="a" style="left:4px;top:528px;width:34px;height:1px;background:#fff;"></div>
<svg style="left:5.5px;top:533.5px;" width="17" height="17" viewBox="0 0 17 17"><circle cx="8.5" cy="8.5" r="6.3" fill="none" stroke="#b3af95" stroke-width="1.1"/><path d="M8.5 0.5 V3.5 M8.5 13.5 V16.5 M0.5 8.5 H3.5 M13.5 8.5 H16.5 M6.5 8.5 H10.5 M8.5 6.5 V10.5" stroke="#b3af95" stroke-width="1.2"/></svg>
<svg style="left:5.5px;top:555.5px;" width="17" height="17" viewBox="0 0 17 17"><path d="M5 1 V16 M1 5.5 H5 M1 10.5 H5" stroke="#b3af95" stroke-width="1.3"/><rect x="5.5" y="4" width="11" height="8.5" fill="#cbc7ae" stroke="#b3af95" stroke-width="1"/><path d="M9 8.2 H13" stroke="#b3af95" stroke-width="1.2"/></svg>
<div class="a" style="left:4px;top:580px;width:34px;height:1px;background:#c9c6b4;"></div>
<div class="a" style="left:4px;top:581px;width:34px;height:1px;background:#fff;"></div>
<svg style="left:7px;top:590px;" width="16" height="12" viewBox="0 0 16 12"><rect x="0.5" y="0.5" width="15" height="11" fill="#fff" stroke="#404880" stroke-width="1"/><rect x="0.5" y="0.5" width="15" height="3" fill="#3848a0"/><path d="M0.5 6 H15.5 M0.5 9 H15.5 M5.5 3.5 V11.5 M10.5 3.5 V11.5" stroke="#404880" stroke-width="1"/></svg>
<svg style="left:28px;top:596px;" width="6" height="3"><polygon points="0,0 6,0 3,3" fill="#000"/></svg>
<svg style="left:49.5px;top:180px;" width="17" height="17" viewBox="0 0 17 17"><g fill="#cbc7ae" stroke="#b3af95" stroke-width="1" stroke-linejoin="round"><path d="M1 2 L6 6 V14 L1 10 Z"/><path d="M6 6 L9 8 V16 L6 14 Z" fill="#c4c0a6"/><path d="M9 8 L15 2 V10 L9 16 Z"/></g></svg>
<svg style="left:49.5px;top:203.5px;" width="17" height="17" viewBox="0 0 17 17"><g fill="#cbc7ae" stroke="#b3af95" stroke-width="1" stroke-linejoin="round"><path d="M3 4 L8 7 V15 L3 12 Z"/><path d="M8 7 L13 4 V8 L16 9.5 V13 L8 15 Z" fill="#c4c0a6"/><path d="M3 1 V4 M1.5 2.5 L3 0.8 L4.5 2.5"/></g></svg>
<svg style="left:49.5px;top:226.5px;" width="17" height="17" viewBox="0 0 17 17"><g fill="#cbc7ae" stroke="#b3af95" stroke-width="1" stroke-linejoin="round"><rect x="1" y="1" width="15" height="15"/><path d="M1 1 L8 7 H16 M8 7 V16" fill="none"/><polygon points="1,1 8,7 8,16 1,16" fill="#c4c0a6"/></g></svg>
<svg style="left:49.5px;top:249.5px;" width="17" height="17" viewBox="0 0 17 17"><g fill="#cbc7ae" stroke="#b3af95" stroke-width="1" stroke-linejoin="round"><path d="M16 3 H8 C2 3 2 13 8 13 H16 V10 H9 C7 10 7 6.5 9 6.5 H16 Z"/><path d="M8 13 V15.5 H16 V13" fill="#c4c0a6"/></g></svg>
<svg style="left:49.5px;top:272.5px;" width="17" height="17" viewBox="0 0 17 17"><g fill="#cbc7ae" stroke="#b3af95" stroke-width="1" stroke-linejoin="round"><polygon points="5,1 12,1 8.5,7"/><path d="M1 9 L8.5 12 L16 9 V12 L8.5 16 L1 12 Z"/></g></svg>
<svg style="left:49.5px;top:295.5px;" width="17" height="17" viewBox="0 0 17 17"><g fill="#cbc7ae" stroke="#b3af95" stroke-width="1" stroke-linejoin="round"><rect x="1" y="1" width="15" height="15"/><path d="M1 9 H16 M10 1 V9 M7 9 V16" fill="none"/></g></svg>
<svg style="left:49.5px;top:319px;" width="17" height="17" viewBox="0 0 17 17"><g fill="#cbc7ae" stroke="#b3af95" stroke-width="1" stroke-linejoin="round"><path d="M1 12 H5 L10 5 H16 V8 H11.5 L6.5 15 H1 Z"/></g></svg>
<svg style="left:49.5px;top:342px;" width="17" height="17" viewBox="0 0 17 17"><g fill="#cbc7ae" stroke="#b3af95" stroke-width="1" stroke-linejoin="round"><path d="M3 7 C3 2 7 1 10 1 H14 V10 H16 V15 H6 C3 15 2 12 3 7 Z"/><path d="M6 10 H14" fill="none"/></g></svg>
<svg style="left:49.5px;top:365px;" width="17" height="17" viewBox="0 0 17 17"><g fill="#cbc7ae" stroke="#b3af95" stroke-width="1" stroke-linejoin="round"><path d="M6.5 1 H10.5 L15 14 Q8.5 18 2 14 Z"/><path d="M8.5 1 V16" fill="none"/></g></svg>
<div class="a" style="left:48px;top:388px;width:22px;height:1px;background:#c9c6b4;"></div>
<div class="a" style="left:48px;top:389px;width:22px;height:1px;background:#fff;"></div>
<svg style="left:50px;top:395px;" width="16" height="16" viewBox="0 0 16 16"><polygon points="1,1 12,1 15,4 15,15 4,15 1,12" fill="#d8a808" stroke="#1a1400" stroke-width="1.1" stroke-linejoin="round"/><polygon points="1,1 12,1 15,4 4,4" fill="#f8e060"/><rect x="4" y="4" width="11" height="11" fill="url(#gYel)" stroke="#1a1400" stroke-width="1"/><path d="M1 1 L4 4" stroke="#1a1400" stroke-width="1"/><rect x="6" y="6" width="7" height="7" fill="#fff8b0" stroke="#1a1400" stroke-width="0.9"/><rect x="7.5" y="8" width="4" height="3.5" fill="url(#gGrn)" stroke="#0a5010" stroke-width="0.7"/></svg>
<svg style="left:50px;top:419px;" width="16" height="16" viewBox="0 0 16 16"><polygon points="1,1 12,1 15,4 15,15 4,15 1,12" fill="#d8a808" stroke="#1a1400" stroke-width="1.1" stroke-linejoin="round"/><polygon points="1,1 12,1 15,4 4,4" fill="#f8e060"/><rect x="4" y="4" width="11" height="11" fill="url(#gYel)" stroke="#1a1400" stroke-width="1"/><path d="M1 1 L4 4" stroke="#1a1400" stroke-width="1"/><circle cx="9.5" cy="9.5" r="3.8" fill="#0a7018" stroke="#0a4010" stroke-width="0.8"/><circle cx="10.2" cy="10.2" r="2.3" fill="#50e060"/><circle cx="8.7" cy="8.7" r="1.3" fill="#fff"/></svg>
<div class="a" style="left:48px;top:443px;width:22px;height:1px;background:#c9c6b4;"></div>
<div class="a" style="left:48px;top:444px;width:22px;height:1px;background:#fff;"></div>
<svg style="left:49.5px;top:448.5px;" width="17" height="17" viewBox="0 0 17 17"><g fill="#cbc7ae" stroke="#b3af95" stroke-width="1" stroke-linejoin="round"><path d="M1 12 H16 V15 H1 Z"/><rect x="10.5" y="2" width="3" height="10"/><path d="M5 1 V9 M3 7 L5 9.5 L7 7" fill="none" stroke-width="1.3"/></g></svg>
<svg style="left:49.5px;top:471.5px;" width="17" height="17" viewBox="0 0 17 17"><g fill="#cbc7ae" stroke="#b3af95" stroke-width="1" stroke-linejoin="round"><path d="M1 12 H10 C13 12 13 10 13 8 V2 H16 V10 C16 14 14 15 10 15 H1 Z"/><path d="M5 10 V2 M3 4 L5 1.5 L7 4" fill="none" stroke-width="1.3"/></g></svg>
<div class="a" style="left:47px;top:493px;width:23px;height:23px;background:#fff;border:1px solid #9ab0d0;border-radius:3px;box-sizing:border-box;"></div>
<svg style="left:49.5px;top:498.5px;" width="17" height="13" viewBox="0 0 17 13"><polygon points="1,4 5,1 16,1 16,8 12,12 1,12" fill="#3a5a90" stroke="#000" stroke-width="1" stroke-linejoin="round"/><polygon points="1,4 5,1 16,1 12,4" fill="#c8d8f0" stroke="#000" stroke-width="0.8"/><rect x="1" y="4" width="11" height="8" fill="#5a7ab8" stroke="#000" stroke-width="0.9"/><polygon points="7,1 10,1 7,4 4,4" fill="#f0a020"/><rect x="4" y="4" width="3" height="8" fill="#f0a020"/></svg>
<svg style="left:49.5px;top:518.5px;" width="17" height="17" viewBox="0 0 17 17"><polygon points="8.5,1 15,5 15,12 8.5,16 2,12 2,5" fill="#fff" stroke="#c01010" stroke-width="1.3"/><polygon points="8.5,8.5 15,5 15,12 8.5,16" fill="#e02020"/><polygon points="2,12 8.5,8.5 8.5,16" fill="#f0a020"/><circle cx="8.5" cy="8.5" r="7" fill="none" stroke="#e01010" stroke-width="1.4"/><path d="M3.5 3.5 L13.5 13.5" stroke="#e01010" stroke-width="1.4"/></svg>
<div class="a" style="left:48px;top:543px;width:22px;height:1px;background:#c9c6b4;"></div>
<div class="a" style="left:48px;top:544px;width:22px;height:1px;background:#fff;"></div>
<svg style="left:49.5px;top:549.5px;" width="17" height="17" viewBox="0 0 17 17"><polygon points="1,9 10,14 10,16 1,11" fill="#f0a820" stroke="#604000" stroke-width="0.7"/><polygon points="10,14 16,7 16,9 10,16" fill="#b0b8c8" stroke="#404858" stroke-width="0.7"/><polygon points="10,1 16,7 10,14 8,9" fill="#e8ecf4" stroke="#404858" stroke-width="0.7"/><polygon points="1,9 8,9 10,14" fill="#f8c840" stroke="#604000" stroke-width="0.7"/></svg>
<svg style="left:49.5px;top:571.5px;" width="17" height="17" viewBox="0 0 17 17"><polygon points="1,5 6,1 10,5 6,9" fill="#f8c840" stroke="#604000" stroke-width="0.7"/><polygon points="1,5 6,9 6,16 1,11" fill="#f0a820" stroke="#604000" stroke-width="0.7"/><polygon points="6,9 10,5 16,8 16,12 6,16" fill="#e8ecf4" stroke="#404858" stroke-width="0.7"/><polygon points="10,5 16,3 16,8" fill="#b0b8c8" stroke="#404858" stroke-width="0.7"/></svg>
<div class="a" style="left:44px;top:593px;width:29px;height:1px;background:#c5c2b2;"></div>
<div class="a" style="left:44px;top:594px;width:29px;height:1px;background:#fff;"></div>
<svg style="left:79.5px;top:177px;" width="17" height="16" viewBox="0 0 17 16"><path d="M1 3.5 L4 1 L9 1.5 L9.5 5 L13 5.5 L15.5 8.5 V12.5 L11.5 15.5 L1 6.5 Z" fill="url(#gYel)" stroke="#000" stroke-width="1.2" stroke-linejoin="round"/><path d="M4 2.5 C6 1.5 8 3 7 5 C9 4.5 11.5 6 10.5 8.5" fill="none" stroke="#000" stroke-width="1.1"/><path d="M10.5 8.5 L11.5 12 L15 9" fill="#b08020" stroke="#000" stroke-width="0.9"/><ellipse cx="9.3" cy="8" rx="2" ry="1.5" fill="#a07020"/></svg>
<svg style="left:4px;top:26.5px;" width="18" height="17" viewBox="0 0 18 17"><path d="M1 3.5 L4 1 L9 1.5 L9.5 5 L13 5.5 L15.5 8.5 V12.5 L11.5 15.5 L1 6.5 Z" fill="url(#gYel)" stroke="#000" stroke-width="1.2" stroke-linejoin="round"/><path d="M4 2.5 C6 1.5 8 3 7 5 C9 4.5 11.5 6 10.5 8.5" fill="none" stroke="#000" stroke-width="1.1"/><path d="M10.5 8.5 L11.5 12 L15 9" fill="#b08020" stroke="#000" stroke-width="0.9"/><ellipse cx="9.3" cy="8" rx="2" ry="1.5" fill="#a07020"/></svg>
<svg style="left:110px;top:177.5px;" width="16" height="17" viewBox="0 0 16 17"><rect x="1.5" y="3.5" width="10" height="12" fill="#d8ecff" stroke="#000" stroke-width="1.2"/><path d="M3.5 7 H9.5 M3.5 9.5 H9.5 M3.5 12 H9.5" stroke="#6090d0" stroke-width="1"/><path d="M5 5 L9 1.5 H15 V4.5 L11 5 L8 7.5 Z" fill="#e8b860" stroke="#604010" stroke-width="0.8"/></svg>
<svg style="left:137px;top:177.5px;" width="16" height="17" viewBox="0 0 16 17"><path d="M2.5 1 V16 M2.5 5 H6 M2.5 13 H9" stroke="#404040" stroke-width="1.2"/><path d="M1 1 V16" stroke="#888" stroke-width="0.8"/><rect x="6" y="1.5" width="6" height="6" rx="1.2" fill="#f0d020" stroke="#403000" stroke-width="1"/><rect x="9" y="9.5" width="6" height="6" rx="1.2" fill="#f0d020" stroke="#403000" stroke-width="1"/></svg>
<svg style="left:78.5px;top:202px;" width="17" height="16" viewBox="0 0 17 16"><path d="M1 3.5 L4 1 L9 1.5 L9.5 5 L13 5.5 L15.5 8.5 V12.5 L11.5 15.5 L1 6.5 Z" fill="url(#gYel)" stroke="#000" stroke-width="1.2" stroke-linejoin="round"/><path d="M4 2.5 C6 1.5 8 3 7 5 C9 4.5 11.5 6 10.5 8.5" fill="none" stroke="#000" stroke-width="1.1"/><path d="M10.5 8.5 L11.5 12 L15 9" fill="#b08020" stroke="#000" stroke-width="0.9"/><ellipse cx="9.3" cy="8" rx="2" ry="1.5" fill="#a07020"/></svg>
<svg style="left:98px;top:219px;" width="16" height="16" viewBox="0 0 16 16"><path d="M0.5 14.5 V1.5 L2 0.5 H5.5 L6.5 2.5 H15.5 V14.5 Z" fill="url(#gFold)" stroke="#b07808" stroke-width="1"/><path d="M1.5 3.5 H14.5" stroke="#fff4b0" stroke-width="1"/><text x="8" y="13" text-anchor="middle" font-family="Liberation Serif,serif" font-size="12" font-weight="bold" fill="#1828b0">A</text></svg>
<svg style="left:98px;top:237px;" width="16" height="16" viewBox="0 0 16 16"><polygon points="0.5,9 8,15.5 15.5,9 15.5,7.5 8,14 0.5,7.5" fill="#705020" stroke="#302000" stroke-width="0.6"/><polygon points="8,0.5 15.5,7.5 8,14 0.5,7.5" fill="url(#gFold)" stroke="#302000" stroke-width="0.9"/></svg>
<svg style="left:98px;top:254.5px;" width="16" height="17" viewBox="0 0 16 17"><rect x="0.5" y="0.5" width="14" height="11" fill="#fff" stroke="#485070" stroke-width="1"/><rect x="0.5" y="0.5" width="14" height="2.5" fill="#485078"/><path d="M0.5 5.5 H14.5 M0.5 8.5 H14.5 M5 3 V11.5 M10 3 V11.5" stroke="#485070" stroke-width="1"/><circle cx="11" cy="12" r="4.3" fill="#30c040" stroke="#fff" stroke-width="0.8"/><path d="M8.8 11 C10 9.5 12 9.5 13.2 11 M13.2 13 C12 14.5 10 14.5 8.8 13" fill="none" stroke="#fff" stroke-width="1.2"/></svg>
<svg style="left:98px;top:273px;" width="16" height="16" viewBox="0 0 16 16"><circle cx="3.5" cy="2.8" r="2.6" fill="#e02020"/><circle cx="3.5" cy="8" r="2.6" fill="#3030d0"/><circle cx="3.5" cy="13.2" r="2.6" fill="#20b030"/><circle cx="2.8" cy="2" r="0.9" fill="#ffb0b0"/><circle cx="2.8" cy="7.2" r="0.9" fill="#b0b0ff"/><circle cx="2.8" cy="12.4" r="0.9" fill="#b0ffb0"/><path d="M7.5 3 H15.5 M7.5 8 H15.5 M7.5 13 H15.5" stroke="#202840" stroke-width="1.8"/></svg>
<svg style="left:98px;top:291px;" width="16" height="16" viewBox="0 0 16 16"><path d="M0.5 14.5 V1.5 L2 0.5 H5.5 L6.5 2.5 H15.5 V14.5 Z" fill="url(#gFold)" stroke="#b07808" stroke-width="1"/><path d="M1.5 3.5 H14.5" stroke="#fff4b0" stroke-width="1"/><path d="M3 12.5 H13" stroke="#c02000" stroke-width="1"/><path d="M5 12 A3 3 0 0 1 11 12 Z" fill="#f06000"/><path d="M8 5 V7.5 M4 7 L5.5 8.8 M12 7 L10.5 8.8 M2.5 10 L4.3 10.8 M13.5 10 L11.7 10.8" stroke="#c03000" stroke-width="1"/></svg>
<svg style="left:98px;top:309px;" width="16" height="16" viewBox="0 0 16 16"><path d="M0.5 14.5 V1.5 L2 0.5 H5.5 L6.5 2.5 H15.5 V14.5 Z" fill="url(#gFold)" stroke="#b07808" stroke-width="1"/><path d="M1.5 3.5 H14.5" stroke="#fff4b0" stroke-width="1"/><text x="8" y="13" text-anchor="middle" font-family="Liberation Sans,sans-serif" font-size="11" font-weight="bold" fill="#202060">Σ</text></svg>
<svg style="left:98px;top:327px;" width="16" height="16" viewBox="0 0 16 16"><polygon points="8,1.5 14.5,8 8,14.5 1.5,8" fill="none" stroke="#0a1840" stroke-width="1"/><path d="M1 1 L3.5 3.5 M12.5 12.5 L15.5 15.5 M6 7 L10 11" stroke="#0a1840" stroke-width="1"/></svg>
<svg style="left:98px;top:345px;" width="16" height="16" viewBox="0 0 16 16"><polygon points="8,1.5 14.5,8 8,14.5 1.5,8" fill="none" stroke="#0a1840" stroke-width="1"/><path d="M1 1 L3.5 3.5 M12.5 12.5 L15.5 15.5 M6 7 L10 11" stroke="#0a1840" stroke-width="1"/></svg>
<svg style="left:98px;top:363px;" width="16" height="16" viewBox="0 0 16 16"><polygon points="8,1.5 14.5,8 8,14.5 1.5,8" fill="none" stroke="#0a1840" stroke-width="1"/><path d="M1 1 L3.5 3.5 M12.5 12.5 L15.5 15.5 M6 7 L10 11" stroke="#0a1840" stroke-width="1"/></svg>
<svg style="left:98px;top:381px;" width="16" height="16" viewBox="0 0 16 16"><path d="M4.5 14 V2 M4.5 13.5 H14" stroke="#c01030" stroke-width="1.1"/><path d="M2.5 4 L4.5 1 L6.5 4 M12 11.5 L15 13.5 L12 15.5" fill="none" stroke="#c01030" stroke-width="1.1"/><path d="M2.5 11.5 L6.5 15.5 M6.5 11.5 L2.5 15.5" stroke="#202020" stroke-width="1"/></svg>
<svg style="left:98px;top:399px;" width="16" height="16" viewBox="0 0 16 16"><rect x="1" y="13" width="14" height="2.5" rx="1" fill="url(#gYel)" stroke="#403000" stroke-width="0.9"/><rect x="2" y="1" width="2.8" height="12" fill="url(#gYel)" stroke="#403000" stroke-width="0.9"/><path d="M5 13 V8 Q10 8 11.5 13 Z" fill="#30c040" stroke="#0a5010" stroke-width="0.7"/><path d="M8 8.5 L14.5 1.5" stroke="#202020" stroke-width="1.6"/><path d="M9 5 L12 8 M11 4 L8 8" stroke="#f08020" stroke-width="1"/></svg>
<svg style="left:98px;top:417px;" width="16" height="16" viewBox="0 0 16 16"><polygon points="1,1 12,1 15,4 15,15 4,15 1,12" fill="#d8a808" stroke="#1a1400" stroke-width="1.1" stroke-linejoin="round"/><polygon points="1,1 12,1 15,4 4,4" fill="#f8e060"/><rect x="4" y="4" width="11" height="11" fill="url(#gYel)" stroke="#1a1400" stroke-width="1"/><path d="M1 1 L4 4" stroke="#1a1400" stroke-width="1"/><rect x="10" y="10" width="6" height="6" fill="url(#gGrn)" stroke="#0a5010" stroke-width="0.9"/><polygon points="6,7.5 10,7.5 10,5.5 13.5,9 10,12.5 10,10.5 6,10.5" fill="#30b840" stroke="#0a5010" stroke-width="0.6"/></svg>
<svg style="left:98px;top:435px;" width="16" height="16" viewBox="0 0 16 16"><polygon points="1,1 12,1 15,4 15,15 4,15 1,12" fill="#d8a808" stroke="#1a1400" stroke-width="1.1" stroke-linejoin="round"/><polygon points="1,1 12,1 15,4 4,4" fill="#f8e060"/><rect x="4" y="4" width="11" height="11" fill="url(#gYel)" stroke="#1a1400" stroke-width="1"/><path d="M1 1 L4 4" stroke="#1a1400" stroke-width="1"/><rect x="4" y="4" width="11" height="11" fill="#28b038" stroke="#0a4010" stroke-width="1"/><rect x="6.5" y="5.5" width="5.5" height="5.5" fill="#0a7018" stroke="#0a4010" stroke-width="0.6"/><path d="M4 4 L6.5 5.5 M15 4 L12 5.5 M4 15 L6.5 11 M15 15 L12 11" stroke="#0a4010" stroke-width="0.6"/></svg>
<svg style="left:98px;top:453px;" width="16" height="16" viewBox="0 0 16 16"><polygon points="1,1 12,1 15,4 15,15 4,15 1,12" fill="#d8a808" stroke="#1a1400" stroke-width="1.1" stroke-linejoin="round"/><polygon points="1,1 12,1 15,4 4,4" fill="#f8e060"/><rect x="4" y="4" width="11" height="11" fill="url(#gYel)" stroke="#1a1400" stroke-width="1"/><path d="M1 1 L4 4" stroke="#1a1400" stroke-width="1"/><circle cx="9.5" cy="9.5" r="4" fill="#0a7018" stroke="#0a4010" stroke-width="0.8"/><circle cx="10.1" cy="10.1" r="2.5" fill="#50e060"/><path d="M7 8.5 A3 3 0 0 1 10 6.5" stroke="#fff" stroke-width="1.3" fill="none"/></svg>
<svg style="left:98px;top:471px;" width="16" height="16" viewBox="0 0 16 16"><rect x="1.0" y="0.8" width="3.4" height="6.6" rx="1.7" fill="#20a030" stroke="#0a4010" stroke-width="0.7"/><ellipse cx="2.7" cy="2.2" rx="1" ry="0.7" fill="#a0e8a0"/><rect x="6.3" y="0.8" width="3.4" height="6.6" rx="1.7" fill="#20a030" stroke="#0a4010" stroke-width="0.7"/><ellipse cx="8.0" cy="2.2" rx="1" ry="0.7" fill="#a0e8a0"/><rect x="11.6" y="0.8" width="3.4" height="6.6" rx="1.7" fill="#20a030" stroke="#0a4010" stroke-width="0.7"/><ellipse cx="13.3" cy="2.2" rx="1" ry="0.7" fill="#a0e8a0"/><rect x="1.0" y="8.5" width="3.4" height="6.6" rx="1.7" fill="#e8b020" stroke="#0a4010" stroke-width="0.7"/><ellipse cx="2.7" cy="9.9" rx="1" ry="0.7" fill="#a0e8a0"/><rect x="6.3" y="8.5" width="3.4" height="6.6" rx="1.7" fill="#20a030" stroke="#0a4010" stroke-width="0.7"/><ellipse cx="8.0" cy="9.9" rx="1" ry="0.7" fill="#a0e8a0"/><rect x="11.6" y="8.5" width="3.4" height="6.6" rx="1.7" fill="#20a030" stroke="#0a4010" stroke-width="0.7"/><ellipse cx="13.3" cy="9.9" rx="1" ry="0.7" fill="#a0e8a0"/></svg>
<svg style="left:98px;top:489px;" width="16" height="16" viewBox="0 0 16 16"><path d="M8 8 L14.5 4.5 C16 8 15.5 11 13.5 13 Z" fill="#d8dcec" stroke="#505870" stroke-width="0.7"/><path d="M8 8 L13.5 13 C11 15.5 6 15.5 3 13 Z" fill="#f4f4fc" stroke="#505870" stroke-width="0.7"/><path d="M8 8 L3 13 C0.5 10 0.5 5 3.5 2 Z" fill="#f0a020" stroke="#604000" stroke-width="0.7"/><path d="M3.5 2 C5 0.5 8 0.5 9.5 1.5 L8 8 Z" fill="#f8c860" stroke="#604000" stroke-width="0.7"/><path d="M9.5 1.5 C11.5 2 13.5 3 14.5 4.5 L8 8 Z" fill="#fff" stroke="#505870" stroke-width="0.7"/></svg>
<svg style="left:98px;top:507px;" width="16" height="16" viewBox="0 0 16 16"><rect x="3.5" y="2.5" width="11" height="11" fill="#d0d0d0" stroke="#202020" stroke-width="1"/><circle cx="9" cy="8" r="3" fill="#e8e8f0" stroke="#404040" stroke-width="1"/><rect x="1" y="3.5" width="3" height="3" fill="#f0a030" stroke="#604000" stroke-width="0.7"/><rect x="1" y="9.5" width="3" height="3" fill="#f0a030" stroke="#604000" stroke-width="0.7"/><rect x="6" y="0.5" width="3" height="2.5" fill="#f0a030" stroke="#604000" stroke-width="0.7"/><rect x="11" y="0.5" width="3" height="2.5" fill="#f0a030" stroke="#604000" stroke-width="0.7"/><rect x="7.5" y="13" width="3" height="2.5" fill="#f0a030" stroke="#604000" stroke-width="0.7"/></svg>
<svg style="left:98px;top:525px;" width="16" height="16" viewBox="0 0 16 16"><path d="M1 1.5 H4 V11.5 H8.5 V14.5 H1 Z" fill="#d8d8d8" stroke="#101010" stroke-width="1"/><path d="M5 6.5 H7" stroke="#1030c0" stroke-width="1.6"/><polygon points="6.5,4 9.5,6.5 6.5,9" fill="#1030c0"/><rect x="11" y="0.5" width="4" height="15" fill="#e8e8e8" stroke="#101010" stroke-width="1"/><rect x="11" y="6" width="4" height="4" fill="#f0a020" stroke="#101010" stroke-width="0.8"/></svg>
<svg style="left:98px;top:543px;" width="16" height="16" viewBox="0 0 16 16"><rect x="1" y="1" width="14" height="14" fill="#d4e0ec" stroke="#6a7a90" stroke-width="1" stroke-dasharray="1.5,1.5"/><path d="M4 4 L12 12 M12 4 L4 12 M8 2 V14" stroke="#a8b8c8" stroke-width="1" stroke-dasharray="1.5,1.5"/></svg>
<svg style="left:1578px;top:195px;" width="16" height="16" viewBox="0 0 16 16"><polygon points="8,1 15.5,8 13.5,8 13.5,15 2.5,15 2.5,8 0.5,8" fill="#f8e890" stroke="#000" stroke-width="1.1" stroke-linejoin="round"/><rect x="6.5" y="10" width="3" height="5" fill="#f0a020" stroke="#000" stroke-width="0.8"/><polygon points="11,2 13,2 13,5" fill="#d02020"/></svg>
<svg style="left:1578px;top:222px;" width="16" height="16" viewBox="0 0 16 16"><rect x="1" y="8" width="4.5" height="7.5" fill="#20a030" stroke="#000" stroke-width="0.9"/><rect x="5.5" y="4" width="4.5" height="11.5" fill="#f0d020" stroke="#000" stroke-width="0.9"/><rect x="10" y="1.5" width="5" height="14" fill="#2868d8" stroke="#000" stroke-width="0.9"/><polygon points="1,8 3,5.5 7,5.5 5.5,8" fill="#60d070" stroke="#000" stroke-width="0.7"/></svg>
<svg style="left:1578px;top:249.5px;" width="16" height="15" viewBox="0 0 16 15"><path d="M0.5 13.5 V3.5 L2 2 H6 L7.5 3.5 H13.5 V6" fill="#f0c850" stroke="#a07010" stroke-width="1"/><path d="M0.5 13.5 L3 6 H15.5 L13 13.5 Z" fill="url(#gFold)" stroke="#a07010" stroke-width="1"/><circle cx="6.5" cy="7.5" r="3" fill="#d0e8ff" stroke="#80a8d0" stroke-width="0.8"/></svg>
</body></html>
